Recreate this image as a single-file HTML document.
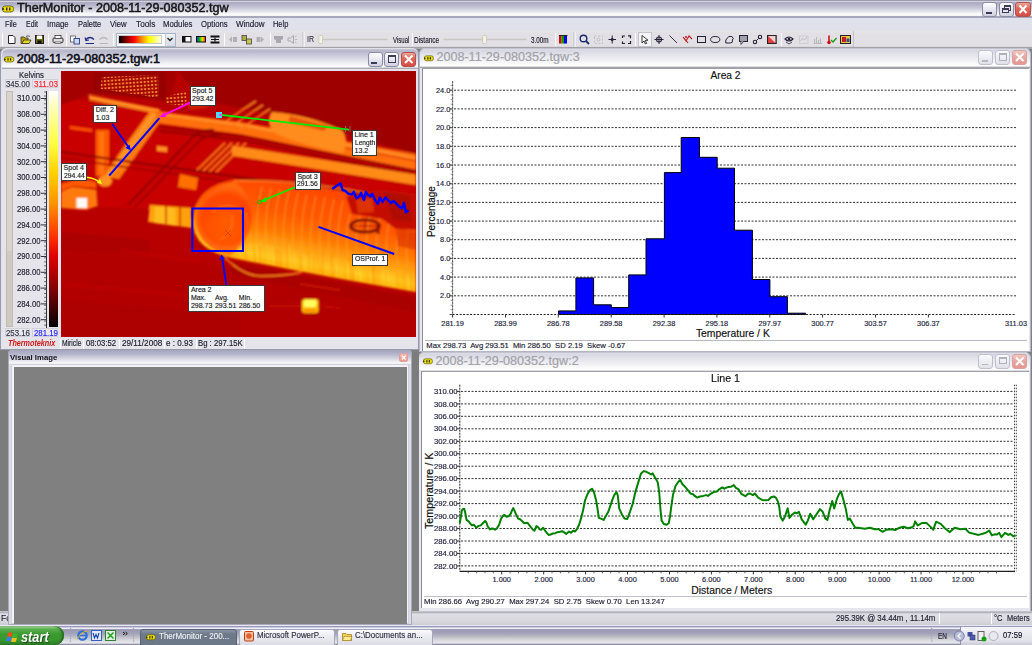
<!DOCTYPE html>
<html><head><meta charset="utf-8">
<style>
*{margin:0;padding:0;box-sizing:border-box}
html,body{width:1032px;height:645px;overflow:hidden;background:#808080;font-family:"Liberation Sans",sans-serif;font-size:11px;color:#000;position:relative}
.a{position:absolute}
.t{position:absolute;white-space:pre;line-height:1;transform-origin:0 0}
svg{position:absolute;overflow:visible}
.xpb{position:absolute;border:1px solid #8b8ba8;border-radius:3px;background:linear-gradient(#ffffff,#ececf4 40%,#d0d0e0)}
.xpc{position:absolute;border:1px solid #b35050;border-radius:3px;background:linear-gradient(#eaa898,#df6a5a 40%,#d44c44)}
.xpb.in{border-color:#c0c0cc;background:linear-gradient(#fbfbfd,#f0f0f5 40%,#e0e0e8)}
.xpc.in{border-color:#d8a0a0;background:linear-gradient(#f2c8c0,#eaa8a0 40%,#e49890)}
</style></head><body>
<div class="a" style="left:0px;top:0px;width:1032px;height:18px;background:linear-gradient(#9c9cac 0px,#9c9cac 1px,#d4d4e0 1px,#d4d4e0 2px,#a9a9c3 2px,#b0b0c8 4px,#c8c8d8 8px,#e8e8f0 12px,#fbfbfb 14px,#f4f4f6 16px,#a8a8bc 16px,#a8a8bc 18px)"></div>
<svg style="left:2px;top:5px" width="12.0" height="8.0" viewBox="0 0 12 8"><rect x="0.5" y="1" width="11" height="6" rx="2.5" fill="#f0e000" stroke="#555500" stroke-width="0.8"/><rect x="4" y="2.5" width="1.5" height="3" fill="#333"/><rect x="7" y="2.5" width="1.5" height="3" fill="#333"/><circle cx="1" cy="4" r="1" fill="#223"/></svg>
<div class="t" style="left:17.30px;top:2.46px;font-size:12.8px;color:#161616;transform:scaleX(0.9830);-webkit-text-stroke:0.5px #161616">TherMonitor - 2008-11-29-080352.tgw</div>
<div class="xpb" style="left:982px;top:2px;width:15px;height:15px"></div><div class="a" style="left:986px;top:12px;width:6px;height:2px;background:#3c3c58"></div>
<div class="xpb" style="left:999px;top:2px;width:15px;height:15px"></div><div class="a" style="left:1004px;top:5px;width:7px;height:6px;border:1px solid #3c3c58;border-top-width:2px"></div>
<div class="a" style="left:1002px;top:8px;width:7px;height:5px;border:1px solid #3c3c58;border-top-width:2px;background:#e4e4ee"></div>
<div class="xpc" style="left:1015px;top:2px;width:16px;height:15px"></div><svg style="left:1015px;top:2px" width="16" height="15"><path d="M4.5 3.5 L11.5 11 M11.5 3.5 L4.5 11" stroke="#fff" stroke-width="2"/></svg><div class="a" style="left:0px;top:18px;width:1032px;height:12.5px;background:#dfe2ea"></div>
<div class="t" style="left:4.70px;top:19.62px;font-size:8.6px;color:#1c1c30;transform:scaleX(0.8515);-webkit-text-stroke:0.15px #1c1c30">File</div>
<div class="t" style="left:25.70px;top:19.62px;font-size:8.6px;color:#1c1c30;transform:scaleX(0.8097);-webkit-text-stroke:0.15px #1c1c30">Edit</div>
<div class="t" style="left:46.70px;top:19.62px;font-size:8.6px;color:#1c1c30;transform:scaleX(0.9037);-webkit-text-stroke:0.15px #1c1c30">Image</div>
<div class="t" style="left:77.70px;top:19.62px;font-size:8.6px;color:#1c1c30;transform:scaleX(0.8702);-webkit-text-stroke:0.15px #1c1c30">Palette</div>
<div class="t" style="left:110.00px;top:19.62px;font-size:8.6px;color:#1c1c30;transform:scaleX(0.9034);-webkit-text-stroke:0.15px #1c1c30">View</div>
<div class="t" style="left:135.70px;top:19.62px;font-size:8.6px;color:#1c1c30;transform:scaleX(0.9613);-webkit-text-stroke:0.15px #1c1c30">Tools</div>
<div class="t" style="left:163.30px;top:19.62px;font-size:8.6px;color:#1c1c30;transform:scaleX(0.9044);-webkit-text-stroke:0.15px #1c1c30">Modules</div>
<div class="t" style="left:200.70px;top:19.62px;font-size:8.6px;color:#1c1c30;transform:scaleX(0.8975);-webkit-text-stroke:0.15px #1c1c30">Options</div>
<div class="t" style="left:235.70px;top:19.62px;font-size:8.6px;color:#1c1c30;transform:scaleX(0.9350);-webkit-text-stroke:0.15px #1c1c30">Window</div>
<div class="t" style="left:272.70px;top:19.62px;font-size:8.6px;color:#1c1c30;transform:scaleX(0.8650);-webkit-text-stroke:0.15px #1c1c30">Help</div>
<div class="a" style="left:0px;top:30.5px;width:1032px;height:17.5px;background:linear-gradient(#e6e6e8,#e2e0e4 2px,#e2e0e4 15px,#c8c8cc 16.5px,#a4a4a4 17.5px)"></div>
<div class="a" style="left:0px;top:48px;width:1032px;height:1px;background:#a8a8ac"></div>
<div class="a" style="left:2px;top:33px;width:1px;height:13px;background:#b8b8c0;border-right:1px solid #fff"></div>
<div class="a" style="left:48.3px;top:33px;width:1px;height:13px;background:#b8b8c0;border-right:1px solid #fff"></div>
<div class="a" style="left:66.3px;top:33px;width:1px;height:13px;background:#b8b8c0;border-right:1px solid #fff"></div>
<div class="a" style="left:113px;top:33px;width:1px;height:13px;background:#b8b8c0;border-right:1px solid #fff"></div>
<div class="a" style="left:223.7px;top:33px;width:1px;height:13px;background:#b8b8c0;border-right:1px solid #fff"></div>
<div class="a" style="left:269.5px;top:33px;width:1px;height:13px;background:#b8b8c0;border-right:1px solid #fff"></div>
<div class="a" style="left:411.6px;top:33px;width:1px;height:13px;background:#b8b8c0;border-right:1px solid #fff"></div>
<div class="a" style="left:554.8px;top:33px;width:1px;height:13px;background:#b8b8c0;border-right:1px solid #fff"></div>
<div class="a" style="left:635px;top:33px;width:1px;height:13px;background:#b8b8c0;border-right:1px solid #fff"></div>
<div class="a" style="left:780.7px;top:33px;width:1px;height:13px;background:#b8b8c0;border-right:1px solid #fff"></div>
<div class="a" style="left:301.5px;top:32px;width:3px;height:15px;background:linear-gradient(90deg,#c8c8d0,#f8f8fa)"></div>
<div class="a" style="left:573px;top:32px;width:3px;height:15px;background:linear-gradient(90deg,#c8c8d0,#f8f8fa)"></div>
<div class="a" style="left:853px;top:31px;width:1px;height:17px;background:#c0c0c8"></div>
<svg style="left:0;top:0" width="1032" height="50"><path d="M8.5 35.5 h4.5 l2 2 v6 h-6.5z" fill="#fff" stroke="#222" stroke-width="1"/><path d="M21 37 h3 l1 1 h3 v5.5 h-7z" fill="#b8a000" stroke="#333" stroke-width="0.8"/><path d="M22 43.5 l1.8-3.5 h7.2 l-1.8 3.5z" fill="#e8d820" stroke="#333" stroke-width="0.8"/><path d="M26 36.5 q2-1.5 4 0" fill="none" stroke="#333" stroke-width="0.8"/><rect x="35.5" y="35.5" width="8" height="8" fill="#6a6a10" stroke="#222" stroke-width="1"/><rect x="37" y="35.5" width="5" height="3.5" fill="#fff"/><rect x="37.5" y="40.5" width="4" height="3" fill="#111"/><rect x="53" y="38" width="10" height="4.5" rx="1" fill="#dcdcdc" stroke="#333" stroke-width="1"/><rect x="55" y="35.5" width="6" height="3" fill="#fff" stroke="#333" stroke-width="0.8"/><rect x="55" y="42" width="6" height="1.5" fill="#fff" stroke="#333" stroke-width="0.6"/><rect x="70.5" y="36" width="5" height="6" fill="#fff" stroke="#556" stroke-width="0.8"/><rect x="74" y="38.5" width="5.5" height="5.5" fill="#ccd8f0" stroke="#2a3a8a" stroke-width="0.9"/><path d="M86 39.5 q4-4 8 0" fill="none" stroke="#1a2a8a" stroke-width="1.3"/><path d="M85 37.5 l1 3 l3-0.5" fill="none" stroke="#1a2a8a" stroke-width="1.2"/><path d="M85.5 43.5 h8.5" stroke="#1a2a8a" stroke-width="1"/><path d="M99.5 39.5 q4-4 8 0" fill="none" stroke="#b8b8c0" stroke-width="1.3"/><path d="M99.5 43.5 h8.5" stroke="#b8b8c0" stroke-width="1"/><rect x="182.5" y="36.5" width="8.5" height="5.5" fill="#fff" stroke="#111" stroke-width="1"/><rect x="182.5" y="36.5" width="3" height="5.5" fill="#111"/><defs><linearGradient id="rb" x1="0" x2="1"><stop offset="0" stop-color="#2020ff"/><stop offset=".35" stop-color="#00c000"/><stop offset=".65" stop-color="#ffe000"/><stop offset="1" stop-color="#ff2000"/></linearGradient></defs><rect x="196.5" y="36.5" width="9" height="5.5" fill="url(#rb)" stroke="#111" stroke-width="1"/><rect x="210.5" y="35.5" width="9" height="2" fill="#111"/><rect x="210.5" y="41.5" width="9" height="2" fill="#111"/><path d="M211 39.5 h8" stroke="#111" stroke-width="1"/><path d="M215 37.5 v4" stroke="#111" stroke-width="1.2"/><path d="M229 39.5 l3-3 v6z M233 37 h4 v5 h-4z" fill="#b0b0b8"/><rect x="242" y="35.5" width="4.5" height="5" fill="#b0b040" stroke="#444" stroke-width="0.8"/><rect x="246.5" y="39" width="5" height="5" fill="#c8c850" stroke="#444" stroke-width="0.8"/><path d="M264 39.5 l-3-3 v6z M256.5 37 h4 v5 h-4z" fill="#b0b0b8"/><path d="M274 36 h9 v3 l-2 1 v3 h-5 v-3 l-2-1z" fill="#a8a8b0"/><path d="M288 38 h2.5 l3-2.5 v8 l-3-2.5 h-2.5z" fill="none" stroke="#a8a8b0" stroke-width="1"/><path d="M295 37 l1.5 -1 M295 39.5 h2 M295 42 l1.5 1" stroke="#a8a8b0" stroke-width="0.8"/><path d="M322 39.5 h65.5" stroke="#c8c8c0" stroke-width="1.5"/><rect x="318.8" y="35.5" width="3.8" height="8" rx="1" fill="#f4f2e4" stroke="#c8c4b0" stroke-width="0.8"/><path d="M443.5 39.5 h83" stroke="#c8c8c0" stroke-width="1.5"/><rect x="482.6" y="35.5" width="4" height="8" rx="1" fill="#f4f2e4" stroke="#c8c4b0" stroke-width="0.8"/><rect x="559" y="35.5" width="2.5" height="8" fill="#e00000"/><rect x="561.5" y="35.5" width="2.5" height="8" fill="#00a000"/><rect x="564" y="35.5" width="3" height="8" fill="#0000e0"/><path d="M559 35.5 h8.5" stroke="#222" stroke-width="1"/><circle cx="583.5" cy="38.5" r="3.3" fill="none" stroke="#1a2a70" stroke-width="1.4"/><path d="M586 41 l3 3" stroke="#1a2a70" stroke-width="1.8"/><rect x="594.5" y="36" width="8" height="7.5" fill="none" stroke="#b8b8c0" stroke-width="0.8" stroke-dasharray="2 1.5"/><circle cx="598.5" cy="39.7" r="1.5" fill="none" stroke="#b8b8c0" stroke-width="0.8"/><path d="M608.5 39.5 h7.5 M612.2 35.5 v8" stroke="#222238" stroke-width="1"/><circle cx="612.2" cy="39.5" r="1.5" fill="#222238"/><path d="M622.5 38 v-2 h2.5 M628 35.8 h2.5 v2.5 M630.5 41 v2.5 h-2.5 M625 43.5 h-2.5 v-2" fill="none" stroke="#222238" stroke-width="1.2"/><rect x="638.5" y="32.5" width="13" height="14" fill="#f4f4f6" stroke="#c4c4cc" stroke-width="1"/><path d="M642 35.5 v7.5 l2-2 l1.5 3 l1.2-0.6 l-1.5-3 l2.8-0.2z" fill="#fff" stroke="#222" stroke-width="0.9"/><circle cx="659" cy="39.5" r="2.5" fill="none" stroke="#222238" stroke-width="1.1"/><path d="M654.5 39.5 h9 M659 35 v9" stroke="#222238" stroke-width="1"/><path d="M669.5 35.5 l7.5 7.5" stroke="#333348" stroke-width="1"/><path d="M683 37 l3 4 l3-5 l3 3 M684 38 l4 5" fill="none" stroke="#c02020" stroke-width="1.1"/><circle cx="686" cy="37" r="1" fill="#c02020"/><rect x="697.5" y="36.5" width="8" height="6" fill="none" stroke="#222238" stroke-width="1"/><ellipse cx="715.2" cy="39.5" rx="4.6" ry="3" fill="none" stroke="#222238" stroke-width="1"/><path d="M725.8 43 v-3 l3-3.5 q4-1 4.5 2 l-1 1.5 q1 3-2 3z" fill="none" stroke="#222238" stroke-width="1"/><rect x="739.5" y="35.5" width="8" height="6" fill="#a0a0a8" stroke="#222238" stroke-width="1"/><path d="M741 41.5 l0 3 l2.5-3" fill="#fff" stroke="#222238" stroke-width="0.8"/><circle cx="755" cy="42" r="1.7" fill="none" stroke="#222238" stroke-width="1.1"/><circle cx="760" cy="37" r="1.7" fill="none" stroke="#222238" stroke-width="1.1"/><path d="M756.3 40.7 l2.4-2.4" stroke="#222238" stroke-width="1"/><rect x="767.5" y="35.5" width="8.5" height="8" fill="#e04040" stroke="#222" stroke-width="1"/><path d="M767.5 35.5 l8.5 8 v-8z" fill="#f0d0d0"/><rect x="767.5" y="35.5" width="8.5" height="8" fill="none" stroke="#222" stroke-width="1"/><path d="M785 39 q4-4 8 0 q-4 4-8 0z" fill="#fff" stroke="#222238" stroke-width="1.1"/><circle cx="789" cy="39" r="1.5" fill="#222238"/><path d="M786 42 l3 2 l3-2" fill="none" stroke="#222238" stroke-width="0.8"/><rect x="799.5" y="36" width="8.5" height="7.5" fill="none" stroke="#c8c8d0" stroke-width="0.8"/><path d="M800.5 41 l2-3 l2 2 l2.5-3" fill="none" stroke="#b8b8c0" stroke-width="0.9"/><path d="M813.5 43.5 h8.5 M814.5 43 v-4 M816.5 43 v-6 M818.5 43 v-3 M820.5 43 v-5" stroke="#b8b8c0" stroke-width="1.1"/><path d="M829 35.5 v6.5" stroke="#d01010" stroke-width="1.6"/><circle cx="829" cy="42.5" r="1.8" fill="#d01010"/><path d="M831 40 l2 2 l3.5-4" fill="none" stroke="#10a010" stroke-width="1.3"/><rect x="840.5" y="35.5" width="10" height="8" fill="#f0c040" stroke="#222" stroke-width="1"/><rect x="842" y="37" width="4" height="5" fill="#c02020"/><rect x="846.5" y="38.5" width="3" height="3.5" fill="#3050a0"/></svg>
<div class="a" style="left:115.5px;top:32.5px;width:60.5px;height:14px;background:#fff;border:1px solid #a0b4cc"></div>
<div class="a" style="left:118px;top:35.2px;width:44px;height:8.6px;background:linear-gradient(90deg,#000 0%,#700000 15%,#ff0000 35%,#ff9000 55%,#ffff00 72%,#ffffe8 100%);border:1px solid #c8c8c8"></div>
<div class="a" style="left:165px;top:33.5px;width:10px;height:12px;background:linear-gradient(#f0f0f6,#d8dae6);border-left:1px solid #c8d0e0"></div>
<svg style="left:165px;top:33px" width="10" height="12"><path d="M2.5 5 l2.5 2.5 l2.5-2.5" fill="none" stroke="#222" stroke-width="1.4"/></svg>
<div class="t" style="left:307.00px;top:35.42px;font-size:8.6px;color:#3a3a4a;transform:scaleX(0.8140);-webkit-text-stroke:0.15px #3a3a4a">IR</div>
<div class="t" style="left:392.70px;top:35.62px;font-size:8.6px;color:#1a1a2a;transform:scaleX(0.7048);-webkit-text-stroke:0.15px #1a1a2a">Visual</div>
<div class="t" style="left:413.60px;top:35.62px;font-size:8.6px;color:#1a1a2a;transform:scaleX(0.7531);-webkit-text-stroke:0.15px #1a1a2a">Distance</div>
<div class="t" style="left:531.40px;top:35.62px;font-size:8.6px;color:#1a1a2a;transform:scaleX(0.7363);-webkit-text-stroke:0.15px #1a1a2a">3.00m</div>
<div class="a" style="left:0px;top:47.5px;width:419px;height:302px;background:#e2e3ea;border:1px solid #9a9aae;border-top:none;border-radius:6px 6px 0 0"></div>
<div class="a" style="left:1.5px;top:48.5px;width:416px;height:20px;border-radius:6px 6px 0 0;background:linear-gradient(#c8c8d8 0,#b6b6ca 2px,#c4c4d6 5px,#dcdce6 10px,#f4f4f8 15px,#ffffff 18px,#b0b0bc 19px,#a8a8b4 20px)"></div>
<svg style="left:3.8px;top:56px" width="10.2" height="6.8" viewBox="0 0 12 8"><rect x="0.5" y="1" width="11" height="6" rx="2.5" fill="#f0e000" stroke="#555500" stroke-width="0.8"/><rect x="4" y="2.5" width="1.5" height="3" fill="#333"/><rect x="7" y="2.5" width="1.5" height="3" fill="#333"/><circle cx="1" cy="4" r="1" fill="#223"/></svg>
<div class="t" style="left:16.70px;top:53.23px;font-size:12.6px;color:#0e0e18;-webkit-text-stroke:0.55px #0e0e18">2008-11-29-080352.tgw:1</div>
<div class="xpb" style="left:367.5px;top:51.6px;width:15px;height:15px"></div><div class="a" style="left:371px;top:61.5px;width:6px;height:2px;background:#3c3c58"></div>
<div class="xpb" style="left:384px;top:51.6px;width:15px;height:15px"></div><div class="a" style="left:387.5px;top:55px;width:8px;height:7.5px;border:1px solid #3c3c58;border-top-width:2px"></div>
<div class="xpc" style="left:400.7px;top:51.6px;width:15.5px;height:15px"></div><svg style="left:400.7px;top:51.6px" width="16" height="15"><path d="M4 3.5 L11.5 11 M11.5 3.5 L4 11" stroke="#fff" stroke-width="2"/></svg><div class="a" style="left:2px;top:68.5px;width:415px;height:280px;background:#e4e4ea"></div>
<div class="t" style="left:18.50px;top:71.32px;font-size:8.6px;color:#202030;transform:scaleX(0.9017);-webkit-text-stroke:0.15px #202030">Kelvins</div>
<div class="a" style="left:4.5px;top:79px;width:25px;height:9px;background:#e8e8ee;border:1px solid #d0d0d8"></div>
<div class="a" style="left:32px;top:79px;width:26px;height:9px;background:#e8e8ee;border:1px solid #d0d0d8"></div>
<div class="t" style="left:5.50px;top:79.72px;font-size:8.6px;color:#303040;transform:scaleX(0.9124);-webkit-text-stroke:0.15px #303040">345.00</div>
<div class="t" style="left:33.50px;top:79.72px;font-size:8.6px;color:#ff2030;transform:scaleX(0.9351);-webkit-text-stroke:0.15px #ff2030">311.03</div>
<div class="a" style="left:6px;top:90.5px;width:7px;height:236px;background:linear-gradient(#d8d4cc,#d8d4cc 68%,#cfcabf 68%);border:1px solid #c0bcb4"></div>
<div class="a" style="left:48.5px;top:91px;width:9px;height:236px;background:linear-gradient(#ffffff 0%,#ffffc0 6%,#ffff40 22%,#ffd000 35%,#ff9000 48%,#ff3000 62%,#e00000 70%,#900000 82%,#400000 92%,#000 100%)"></div>
<div class="a" style="left:46px;top:90.5px;width:1px;height:237px;background:#303030"></div>
<div class="t" style="left:16.50px;top:94.32px;font-size:8.6px;color:#202030;transform:scaleX(0.8934);-webkit-text-stroke:0.15px #202030">310.00</div>
<div class="t" style="left:16.50px;top:110.12px;font-size:8.6px;color:#202030;transform:scaleX(0.8934);-webkit-text-stroke:0.15px #202030">308.00</div>
<div class="t" style="left:16.50px;top:125.92px;font-size:8.6px;color:#202030;transform:scaleX(0.8934);-webkit-text-stroke:0.15px #202030">306.00</div>
<div class="t" style="left:16.50px;top:141.72px;font-size:8.6px;color:#202030;transform:scaleX(0.8934);-webkit-text-stroke:0.15px #202030">304.00</div>
<div class="t" style="left:16.50px;top:157.52px;font-size:8.6px;color:#202030;transform:scaleX(0.8934);-webkit-text-stroke:0.15px #202030">302.00</div>
<div class="t" style="left:16.50px;top:173.32px;font-size:8.6px;color:#202030;transform:scaleX(0.8934);-webkit-text-stroke:0.15px #202030">300.00</div>
<div class="t" style="left:16.50px;top:189.12px;font-size:8.6px;color:#202030;transform:scaleX(0.8934);-webkit-text-stroke:0.15px #202030">298.00</div>
<div class="t" style="left:16.50px;top:204.92px;font-size:8.6px;color:#202030;transform:scaleX(0.8934);-webkit-text-stroke:0.15px #202030">296.00</div>
<div class="t" style="left:16.50px;top:220.72px;font-size:8.6px;color:#202030;transform:scaleX(0.8934);-webkit-text-stroke:0.15px #202030">294.00</div>
<div class="t" style="left:16.50px;top:236.52px;font-size:8.6px;color:#202030;transform:scaleX(0.8934);-webkit-text-stroke:0.15px #202030">292.00</div>
<div class="t" style="left:16.50px;top:252.32px;font-size:8.6px;color:#202030;transform:scaleX(0.8934);-webkit-text-stroke:0.15px #202030">290.00</div>
<div class="t" style="left:16.50px;top:268.12px;font-size:8.6px;color:#202030;transform:scaleX(0.8934);-webkit-text-stroke:0.15px #202030">288.00</div>
<div class="t" style="left:16.50px;top:283.92px;font-size:8.6px;color:#202030;transform:scaleX(0.8934);-webkit-text-stroke:0.15px #202030">286.00</div>
<div class="t" style="left:16.50px;top:299.72px;font-size:8.6px;color:#202030;transform:scaleX(0.8934);-webkit-text-stroke:0.15px #202030">284.00</div>
<div class="t" style="left:16.50px;top:315.52px;font-size:8.6px;color:#202030;transform:scaleX(0.8934);-webkit-text-stroke:0.15px #202030">282.00</div>
<svg style="left:0;top:0" width="60" height="340"><path d="M41 98.5 h5" stroke="#303040" stroke-width="1"/><path d="M41 114.3 h5" stroke="#303040" stroke-width="1"/><path d="M41 130.1 h5" stroke="#303040" stroke-width="1"/><path d="M41 145.9 h5" stroke="#303040" stroke-width="1"/><path d="M41 161.7 h5" stroke="#303040" stroke-width="1"/><path d="M41 177.5 h5" stroke="#303040" stroke-width="1"/><path d="M41 193.3 h5" stroke="#303040" stroke-width="1"/><path d="M41 209.1 h5" stroke="#303040" stroke-width="1"/><path d="M41 224.9 h5" stroke="#303040" stroke-width="1"/><path d="M41 240.7 h5" stroke="#303040" stroke-width="1"/><path d="M41 256.5 h5" stroke="#303040" stroke-width="1"/><path d="M41 272.3 h5" stroke="#303040" stroke-width="1"/><path d="M41 288.1 h5" stroke="#303040" stroke-width="1"/><path d="M41 303.9 h5" stroke="#303040" stroke-width="1"/><path d="M41 319.7 h5" stroke="#303040" stroke-width="1"/><path d="M44 92.0 h2" stroke="#505060" stroke-width="0.8"/><path d="M44 96.0 h2" stroke="#505060" stroke-width="0.8"/><path d="M44 99.9 h2" stroke="#505060" stroke-width="0.8"/><path d="M44 103.8 h2" stroke="#505060" stroke-width="0.8"/><path d="M44 107.8 h2" stroke="#505060" stroke-width="0.8"/><path d="M44 111.8 h2" stroke="#505060" stroke-width="0.8"/><path d="M44 115.7 h2" stroke="#505060" stroke-width="0.8"/><path d="M44 119.7 h2" stroke="#505060" stroke-width="0.8"/><path d="M44 123.6 h2" stroke="#505060" stroke-width="0.8"/><path d="M44 127.6 h2" stroke="#505060" stroke-width="0.8"/><path d="M44 131.5 h2" stroke="#505060" stroke-width="0.8"/><path d="M44 135.4 h2" stroke="#505060" stroke-width="0.8"/><path d="M44 139.4 h2" stroke="#505060" stroke-width="0.8"/><path d="M44 143.3 h2" stroke="#505060" stroke-width="0.8"/><path d="M44 147.3 h2" stroke="#505060" stroke-width="0.8"/><path d="M44 151.2 h2" stroke="#505060" stroke-width="0.8"/><path d="M44 155.2 h2" stroke="#505060" stroke-width="0.8"/><path d="M44 159.2 h2" stroke="#505060" stroke-width="0.8"/><path d="M44 163.1 h2" stroke="#505060" stroke-width="0.8"/><path d="M44 167.1 h2" stroke="#505060" stroke-width="0.8"/><path d="M44 171.0 h2" stroke="#505060" stroke-width="0.8"/><path d="M44 174.9 h2" stroke="#505060" stroke-width="0.8"/><path d="M44 178.9 h2" stroke="#505060" stroke-width="0.8"/><path d="M44 182.9 h2" stroke="#505060" stroke-width="0.8"/><path d="M44 186.8 h2" stroke="#505060" stroke-width="0.8"/><path d="M44 190.8 h2" stroke="#505060" stroke-width="0.8"/><path d="M44 194.7 h2" stroke="#505060" stroke-width="0.8"/><path d="M44 198.7 h2" stroke="#505060" stroke-width="0.8"/><path d="M44 202.6 h2" stroke="#505060" stroke-width="0.8"/><path d="M44 206.6 h2" stroke="#505060" stroke-width="0.8"/><path d="M44 210.5 h2" stroke="#505060" stroke-width="0.8"/><path d="M44 214.4 h2" stroke="#505060" stroke-width="0.8"/><path d="M44 218.4 h2" stroke="#505060" stroke-width="0.8"/><path d="M44 222.3 h2" stroke="#505060" stroke-width="0.8"/><path d="M44 226.3 h2" stroke="#505060" stroke-width="0.8"/><path d="M44 230.2 h2" stroke="#505060" stroke-width="0.8"/><path d="M44 234.2 h2" stroke="#505060" stroke-width="0.8"/><path d="M44 238.2 h2" stroke="#505060" stroke-width="0.8"/><path d="M44 242.1 h2" stroke="#505060" stroke-width="0.8"/><path d="M44 246.1 h2" stroke="#505060" stroke-width="0.8"/><path d="M44 250.0 h2" stroke="#505060" stroke-width="0.8"/><path d="M44 254.0 h2" stroke="#505060" stroke-width="0.8"/><path d="M44 257.9 h2" stroke="#505060" stroke-width="0.8"/><path d="M44 261.9 h2" stroke="#505060" stroke-width="0.8"/><path d="M44 265.8 h2" stroke="#505060" stroke-width="0.8"/><path d="M44 269.8 h2" stroke="#505060" stroke-width="0.8"/><path d="M44 273.7 h2" stroke="#505060" stroke-width="0.8"/><path d="M44 277.6 h2" stroke="#505060" stroke-width="0.8"/><path d="M44 281.6 h2" stroke="#505060" stroke-width="0.8"/><path d="M44 285.6 h2" stroke="#505060" stroke-width="0.8"/><path d="M44 289.5 h2" stroke="#505060" stroke-width="0.8"/><path d="M44 293.5 h2" stroke="#505060" stroke-width="0.8"/><path d="M44 297.4 h2" stroke="#505060" stroke-width="0.8"/><path d="M44 301.4 h2" stroke="#505060" stroke-width="0.8"/><path d="M44 305.3 h2" stroke="#505060" stroke-width="0.8"/><path d="M44 309.2 h2" stroke="#505060" stroke-width="0.8"/><path d="M44 313.2 h2" stroke="#505060" stroke-width="0.8"/><path d="M44 317.1 h2" stroke="#505060" stroke-width="0.8"/><path d="M44 321.1 h2" stroke="#505060" stroke-width="0.8"/><path d="M44 325.1 h2" stroke="#505060" stroke-width="0.8"/></svg><div class="a" style="left:4.5px;top:328px;width:25px;height:9px;background:#e8e8ee;border:1px solid #d0d0d8"></div>
<div class="a" style="left:32px;top:328px;width:26px;height:9px;background:#e8e8ee;border:1px solid #d0d0d8"></div>
<div class="t" style="left:5.50px;top:328.92px;font-size:8.6px;color:#303040;transform:scaleX(0.9124);-webkit-text-stroke:0.15px #303040">253.16</div>
<div class="t" style="left:33.50px;top:328.92px;font-size:8.6px;color:#2020ff;transform:scaleX(0.9124);-webkit-text-stroke:0.15px #2020ff">281.19</div>
<svg style="left:61px;top:71px" width="355" height="266" viewBox="61 71 355 266"><defs><clipPath id="tc"><rect x="61" y="71" width="355" height="266"/></clipPath><filter id="bl" x="-10%" y="-10%" width="120%" height="120%"><feGaussianBlur stdDeviation="0.8"/></filter><linearGradient id="cylG" gradientUnits="userSpaceOnUse" x1="300" y1="184" x2="283" y2="274"><stop offset="0" stop-color="#ff4800"/><stop offset="0.35" stop-color="#ff5a00"/><stop offset="0.55" stop-color="#ff7800"/><stop offset="0.7" stop-color="#ffa010"/><stop offset="0.84" stop-color="#ffc820"/><stop offset="0.95" stop-color="#ffa800"/><stop offset="1" stop-color="#ff7000"/></linearGradient><radialGradient id="endG" gradientUnits="userSpaceOnUse" cx="226" cy="220" r="34"><stop offset="0" stop-color="#ff5800"/><stop offset="0.7" stop-color="#ff4000"/><stop offset="1" stop-color="#ff7010"/></radialGradient><pattern id="dots" width="3.6" height="3.6" patternUnits="userSpaceOnUse" patternTransform="rotate(-4)"><rect width="3.6" height="3.6" fill="#a80800"/><rect x="0.8" y="0.8" width="2" height="2" rx="0.6" fill="#ffa040"/></pattern></defs><g clip-path="url(#tc)"><rect x="61" y="71" width="355" height="266" fill="#b80000"/><g filter="url(#bl)"><path d="M61 98 L160 110 L416 172 V240 L300 205 L200 212 L61 205 Z" fill="#c80600"/><path d="M178 71 H416 V154 L330 130 L260 112 L200 100 Z" fill="#9e0000"/><path d="M61 71 H178 L170 98 L90 94 L61 105 Z" fill="#a40000"/><path d="M61 250 L200 262 L300 280 L416 296 V337 H61 Z" fill="#b20000"/><path d="M61 232 L150 240 L150 255 L61 250 Z" fill="#a80000" opacity="0.7"/><path d="M61 300 L240 315 L240 337 L61 337 Z" fill="#aa0000" opacity="0.6"/><path d="M95 73 L165 71 L166 101 L93 92 Z" fill="#960000"/><path d="M185 102 L200 100 L210 108 L190 110 Z" fill="#e03000" opacity="0.6"/><path d="M89 95 L160 109 L159 114 L89 100 Z" fill="#ff8a20"/><path d="M70 126 L92 129 L92 132 L70 129 Z" fill="#ff5000"/><path d="M96 130 H109 V176 H96 Z" fill="#ff5a00"/><path d="M99 132 H104 V174 H99 Z" fill="#ff7a10" opacity="0.8"/><path d="M157 146 L167 147 L167 152 L157 151 Z" fill="#ff9020"/><path d="M150 111 L166 113 L119 179 L103 176 Z" fill="#ff7a10"/><path d="M152 113 L158 114 L111 177 L105 176 Z" fill="#ffa030" opacity="0.7"/><ellipse cx="105" cy="181" rx="7" ry="5.5" fill="#ff9020"/><path d="M155 111 L241 122 L416 154 L416 170 L241 134 L158 123 Z" fill="#ff7010"/><path d="M165 115 L241 125 L416 158" stroke="#ff9a30" stroke-width="1.6" fill="none"/><path d="M300 140 L416 161" stroke="#d83000" stroke-width="1.2" fill="none"/><path d="M226 121 L256 101 M233 125 L263 105 M240 129 L270 109" stroke="#ff7a20" stroke-width="1.6"/><path d="M272 112 Q305 114 342 130 Q350 141 343 153 Q305 146 276 134 Q264 123 272 112 Z" fill="#ff8c1c"/><path d="M290 116 L328 126 L324 131 L288 122 Z" fill="#d83000" opacity="0.6"/><path d="M160 127 L241 136 L416 171 M160 131 L241 140 L416 175" stroke="#900000" stroke-width="1.8" fill="none"/><path d="M232 146 L241 147 L416 174.5 L416 185 L241 157 L232 156 Z" fill="#ff8a18"/><path d="M195 172 L225 143" stroke="#ff8020" stroke-width="1.6"/><path d="M202 172 L232 143" stroke="#ff8020" stroke-width="1.6"/><path d="M209 172 L239 143" stroke="#ff8020" stroke-width="1.6"/><path d="M216 172 L246 143" stroke="#ff8020" stroke-width="1.6"/><path d="M128 205 L194 136 Q202 129 214 130" stroke="#900000" stroke-width="2" fill="none"/><path d="M134 208 L200 140 Q208 134 220 135" stroke="#900000" stroke-width="1.6" fill="none"/><path d="M61 152 L260 180 L416 200" stroke="#900000" stroke-width="2.2" fill="none"/><path d="M61 158 L260 186" stroke="#a00000" stroke-width="1.6" fill="none"/><path d="M61 192 L72 187 L96 190 L97 206 L86 210 L61 208 Z" fill="#ff7a10"/><path d="M61 184 L80 179 L96 182 L96 188 L72 186 L61 191 Z" fill="#ff5a00"/><rect x="76.5" y="198" width="10.5" height="10" fill="#fffcf6"/><path d="M150 205 L191 208 L192 228 L148 222 Z" fill="#ffa010"/><path d="M155 206 L175 208 L176 226 L154 223 Z" fill="#ffc020" opacity="0.8"/><path d="M166 206 v20 M180 207 v20" stroke="#c01000" stroke-width="1.2"/><path d="M180 174 L198 178 L196 190 L178 187 Z" fill="#ff7000"/><path d="M234 180 Q300 178 416 208 L416 292 Q330 278 232 258 Q194 250 192 221 Q196 185 234 180 Z" fill="url(#cylG)"/><path d="M234 182 Q200 188 196 221 Q198 248 230 256 Q252 240 252 214 Q250 192 234 182 Z" fill="url(#endG)" opacity="0.85"/><path d="M212 212 Q228 198 246 214 Q252 234 236 248 M220 240 Q235 232 232 215" stroke="#ff9a30" stroke-width="1" fill="none" opacity="0.6"/><path d="M234 181 Q300 179 380 196" stroke="#ff9030" stroke-width="1.5" fill="none" opacity="0.8"/><path d="M262 186.7 Q253 221.5 259 256.2" stroke="#ffb040" stroke-width="1.1" fill="none" opacity="0.55"/><path d="M271 188.3 Q262 223.1 268 257.9" stroke="#ffb040" stroke-width="1.1" fill="none" opacity="0.55"/><path d="M280 189.8 Q271 224.7 277 259.6" stroke="#ffb040" stroke-width="1.1" fill="none" opacity="0.55"/><path d="M289 191.3 Q280 226.3 286 261.3" stroke="#ffb040" stroke-width="1.1" fill="none" opacity="0.55"/><path d="M298 192.9 Q289 227.9 295 263.0" stroke="#ffb040" stroke-width="1.1" fill="none" opacity="0.55"/><path d="M307 194.4 Q298 229.6 304 264.7" stroke="#ffb040" stroke-width="1.1" fill="none" opacity="0.55"/><path d="M316 195.9 Q307 231.2 313 266.4" stroke="#ffb040" stroke-width="1.1" fill="none" opacity="0.55"/><path d="M325 197.4 Q316 232.8 322 268.1" stroke="#ffb040" stroke-width="1.1" fill="none" opacity="0.55"/><path d="M334 199.0 Q325 234.4 331 269.9" stroke="#ffb040" stroke-width="1.1" fill="none" opacity="0.55"/><path d="M343 200.5 Q334 236.0 340 271.6" stroke="#ffb040" stroke-width="1.1" fill="none" opacity="0.55"/><path d="M350 214.0 Q344 235.0 348 256.0" stroke="#ffb040" stroke-width="1.1" fill="none" opacity="0.55"/><path d="M360 215.0 Q354 236.4 358 257.9" stroke="#ffb040" stroke-width="1.1" fill="none" opacity="0.55"/><path d="M370 216.0 Q364 237.9 368 259.8" stroke="#ffb040" stroke-width="1.1" fill="none" opacity="0.55"/><path d="M380 217.0 Q374 239.3 378 261.7" stroke="#ffb040" stroke-width="1.1" fill="none" opacity="0.55"/><path d="M390 218.0 Q384 240.8 388 263.6" stroke="#ffb040" stroke-width="1.1" fill="none" opacity="0.55"/><path d="M400 219.0 Q394 242.2 398 265.5" stroke="#ffb040" stroke-width="1.1" fill="none" opacity="0.55"/><path d="M410 220.0 Q404 243.7 408 267.4" stroke="#ffb040" stroke-width="1.1" fill="none" opacity="0.55"/><path d="M239.7 246.8 L240.7 258.9" stroke="#ffe040" stroke-width="0.9" opacity="0.6"/><path d="M242.1 241.9 L243.1 259.4" stroke="#ffc020" stroke-width="0.9" opacity="0.6"/><path d="M245.6 237.3 L246.6 260.1" stroke="#ff9000" stroke-width="0.9" opacity="0.6"/><path d="M247.5 244.4 L248.5 260.4" stroke="#ffe040" stroke-width="0.9" opacity="0.6"/><path d="M250.6 243.3 L251.6 261.0" stroke="#ffe040" stroke-width="0.9" opacity="0.6"/><path d="M254.3 250.0 L255.3 261.7" stroke="#ff9000" stroke-width="0.9" opacity="0.6"/><path d="M256.7 244.0 L257.7 262.2" stroke="#ffe040" stroke-width="0.9" opacity="0.6"/><path d="M259.4 247.1 L260.4 262.7" stroke="#ff9000" stroke-width="0.9" opacity="0.6"/><path d="M261.3 241.0 L262.3 263.0" stroke="#ffc020" stroke-width="0.9" opacity="0.6"/><path d="M264.6 246.1 L265.6 263.7" stroke="#ffc020" stroke-width="0.9" opacity="0.6"/><path d="M267.6 244.7 L268.6 264.2" stroke="#ffe040" stroke-width="0.9" opacity="0.6"/><path d="M270.4 245.8 L271.4 264.8" stroke="#ffc020" stroke-width="0.9" opacity="0.6"/><path d="M272.4 245.2 L273.4 265.1" stroke="#ffe040" stroke-width="0.9" opacity="0.6"/><path d="M275.9 248.9 L276.9 265.8" stroke="#ff7a00" stroke-width="0.9" opacity="0.6"/><path d="M278.9 249.9 L279.9 266.4" stroke="#ff7a00" stroke-width="0.9" opacity="0.6"/><path d="M281.0 253.3 L282.0 266.8" stroke="#ff9000" stroke-width="0.9" opacity="0.6"/><path d="M284.3 254.0 L285.3 267.4" stroke="#ffc020" stroke-width="0.9" opacity="0.6"/><path d="M286.8 245.6 L287.8 267.9" stroke="#ff7a00" stroke-width="0.9" opacity="0.6"/><path d="M289.2 244.6 L290.2 268.3" stroke="#ffe040" stroke-width="0.9" opacity="0.6"/><path d="M292.3 256.6 L293.3 268.9" stroke="#ffc020" stroke-width="0.9" opacity="0.6"/><path d="M294.4 252.5 L295.4 269.3" stroke="#ffe040" stroke-width="0.9" opacity="0.6"/><path d="M298.5 259.0 L299.5 270.1" stroke="#ffc020" stroke-width="0.9" opacity="0.6"/><path d="M300.2 255.5 L301.2 270.4" stroke="#ff7a00" stroke-width="0.9" opacity="0.6"/><path d="M303.4 254.7 L304.4 271.0" stroke="#ffe040" stroke-width="0.9" opacity="0.6"/><path d="M306.7 255.0 L307.7 271.7" stroke="#ffe040" stroke-width="0.9" opacity="0.6"/><path d="M308.0 252.1 L309.0 271.9" stroke="#ff7a00" stroke-width="0.9" opacity="0.6"/><path d="M311.2 257.1 L312.2 272.5" stroke="#ffc020" stroke-width="0.9" opacity="0.6"/><path d="M313.5 256.5 L314.5 273.0" stroke="#ff9000" stroke-width="0.9" opacity="0.6"/><path d="M317.2 256.8 L318.2 273.7" stroke="#ff9000" stroke-width="0.9" opacity="0.6"/><path d="M320.2 262.4 L321.2 274.2" stroke="#ff9000" stroke-width="0.9" opacity="0.6"/><path d="M322.3 251.8 L323.3 274.6" stroke="#ff7a00" stroke-width="0.9" opacity="0.6"/><path d="M324.6 258.8 L325.6 275.1" stroke="#ffc020" stroke-width="0.9" opacity="0.6"/><path d="M328.6 254.4 L329.6 275.8" stroke="#ffc020" stroke-width="0.9" opacity="0.6"/><path d="M331.1 252.5 L332.1 276.3" stroke="#ff7a00" stroke-width="0.9" opacity="0.6"/><path d="M334.2 264.8 L335.2 276.9" stroke="#ff9000" stroke-width="0.9" opacity="0.6"/><path d="M335.7 258.0 L336.7 277.2" stroke="#ffe040" stroke-width="0.9" opacity="0.6"/><path d="M339.0 259.6 L340.0 277.8" stroke="#ffc020" stroke-width="0.9" opacity="0.6"/><path d="M341.4 266.2 L342.4 278.3" stroke="#ffc020" stroke-width="0.9" opacity="0.6"/><path d="M344.7 264.4 L345.7 278.9" stroke="#ff9000" stroke-width="0.9" opacity="0.6"/><path d="M347.6 262.2 L348.6 279.4" stroke="#ffe040" stroke-width="0.9" opacity="0.6"/><path d="M349.9 257.7 L350.9 279.9" stroke="#ff7a00" stroke-width="0.9" opacity="0.6"/><path d="M352.6 264.9 L353.6 280.4" stroke="#ff7a00" stroke-width="0.9" opacity="0.6"/><path d="M355.7 270.1 L356.7 281.0" stroke="#ffe040" stroke-width="0.9" opacity="0.6"/><path d="M359.0 265.4 L360.0 281.6" stroke="#ffe040" stroke-width="0.9" opacity="0.6"/><path d="M360.7 271.2 L361.7 281.9" stroke="#ffe040" stroke-width="0.9" opacity="0.6"/><path d="M363.9 265.0 L364.9 282.5" stroke="#ffc020" stroke-width="0.9" opacity="0.6"/><path d="M366.7 272.1 L367.7 283.1" stroke="#ff9000" stroke-width="0.9" opacity="0.6"/><path d="M369.4 271.5 L370.4 283.6" stroke="#ffc020" stroke-width="0.9" opacity="0.6"/><path d="M372.7 265.8 L373.7 284.2" stroke="#ff7a00" stroke-width="0.9" opacity="0.6"/><path d="M374.1 262.6 L375.1 284.5" stroke="#ff7a00" stroke-width="0.9" opacity="0.6"/><path d="M377.5 270.8 L378.5 285.1" stroke="#ff9000" stroke-width="0.9" opacity="0.6"/><path d="M379.6 270.7 L380.6 285.5" stroke="#ffc020" stroke-width="0.9" opacity="0.6"/><path d="M383.0 266.5 L384.0 286.2" stroke="#ffe040" stroke-width="0.9" opacity="0.6"/><path d="M385.3 263.3 L386.3 286.6" stroke="#ffc020" stroke-width="0.9" opacity="0.6"/><path d="M387.9 269.5 L388.9 287.1" stroke="#ffe040" stroke-width="0.9" opacity="0.6"/><path d="M391.7 273.6 L392.7 287.8" stroke="#ffe040" stroke-width="0.9" opacity="0.6"/><path d="M394.3 274.7 L395.3 288.3" stroke="#ffc020" stroke-width="0.9" opacity="0.6"/><path d="M397.4 273.9 L398.4 288.9" stroke="#ff9000" stroke-width="0.9" opacity="0.6"/><path d="M399.6 268.4 L400.6 289.3" stroke="#ffc020" stroke-width="0.9" opacity="0.6"/><path d="M402.5 271.3 L403.5 289.9" stroke="#ff9000" stroke-width="0.9" opacity="0.6"/><path d="M405.5 269.0 L406.5 290.4" stroke="#ff9000" stroke-width="0.9" opacity="0.6"/><path d="M407.3 273.9 L408.3 290.8" stroke="#ffe040" stroke-width="0.9" opacity="0.6"/><path d="M411.3 270.5 L412.3 291.5" stroke="#ff7a00" stroke-width="0.9" opacity="0.6"/><path d="M412.9 272.1 L413.9 291.8" stroke="#ffc020" stroke-width="0.9" opacity="0.6"/><path d="M346 196 L380 190 L416 194 L416 230 L396 229 L382 219 L352 214 Z" fill="#c41000"/><path d="M384 192 L410 196 L412 222 L392 220 Z" fill="#b00800"/><path d="M356 200 L372 198 L374 212 L358 213 Z" fill="#e84000" opacity="0.7"/><path d="M395 228 L416 232 L416 250 L398 246 Z" fill="#d83000" opacity="0.6"/><ellipse cx="365" cy="226" rx="14.5" ry="6.2" fill="none" stroke="#7a0800" stroke-width="2.8"/><path d="M352 226 h26 M365 220.5 v11" stroke="#900a00" stroke-width="1.1"/><path d="M378 222 v12" stroke="#900a00" stroke-width="3"/><path d="M61 284 L236 300" stroke="#c80a00" stroke-width="2" opacity="0.6"/><path d="M120 250 L200 262" stroke="#c80800" stroke-width="3" opacity="0.5"/><path d="M232 262 L416 298 L416 312 L232 274 Z" fill="#a60000" opacity="0.8"/><path d="M300 284 L340 290" stroke="#d01800" stroke-width="3" opacity="0.6"/><path d="M224 257 Q245 277 262 276 Q285 276 302 272" stroke="#ff9020" stroke-width="1.5" fill="none"/><rect x="302" y="299" width="16.5" height="14" rx="3" fill="#ffc000"/><rect x="303.5" y="300" width="13" height="7" rx="2" fill="#ffff60"/><rect x="304" y="309" width="12" height="3" fill="#ff9000"/><path d="M270 306 L302 306 M318 306 L340 308" stroke="#c41000" stroke-width="1.5"/></g><path d="M102 77 L158 75 L159 98 L100 89 Z" fill="url(#dots)" opacity="0.9"/><path d="M166 97 L186 91 L187 106 L166 104 Z" fill="url(#dots)" opacity="0.9"/><path d="M159.4 118.1 L109.2 175.7" stroke="#0000ff" stroke-width="2"/><path d="M112.3 124 L129.5 148.5" stroke="#0000ff" stroke-width="1.8"/><path d="M131 150.5 l-5.5-2.5 l4-3.5z" fill="#0000ff"/><path d="M190.8 102.4 L162 116" stroke="#ff00ff" stroke-width="1.8"/><path d="M159.5 117 l5-5 l1.5 5z" fill="#ff00ff"/><path d="M86.8 177.2 Q95 178 100.8 183" stroke="#ffff00" stroke-width="1.5" fill="none"/><path d="M102 184 l-5-1 l3-4z" fill="#ffff00"/><rect x="216" y="112" width="6" height="6" fill="#40e0ff"/><rect x="219" y="114" width="3" height="2" fill="#ff40ff"/><path d="M222 115 L349 129.6" stroke="#00f000" stroke-width="1.8"/><path d="M345.5 126 v6 M350 126 v6" stroke="#808080" stroke-width="0.8"/><path d="M294.8 187.2 L262 201" stroke="#00f000" stroke-width="1.6"/><path d="M260 202 l6-5 l0.5 5z" fill="#00f000"/><circle cx="259.5" cy="202" r="1.8" fill="none" stroke="#00c000" stroke-width="1"/><polyline points="332.3,189 336,186.2 340.7,183.4 342.5,190 345.3,190.9 348.1,193.7 351.8,194.6 353.7,191.8 356.5,198.3 359.3,196.5 361.1,192.7 363.9,200.2 365.8,191.8 367.6,194.6 370.4,196.5 372.3,193.7 375.1,200.2 377.9,203.9 379.7,197.4 382.5,202 385.3,197.4 388.1,200.2 390.9,203 393.7,201.1 396.5,203.9 399.3,206.7 402,208.6 403.9,203 405.8,212.3 408.6,210.4" stroke="#0000ff" stroke-width="2.4" fill="none" stroke-linejoin="round"/><rect x="192.3" y="208.5" width="50.7" height="42.5" fill="none" stroke="#0000ff" stroke-width="2"/><path d="M225 230 l6 6 M231 230 l-6 6" stroke="#e03000" stroke-width="0.7"/><path d="M226.5 285.8 L222.2 258" stroke="#0000ff" stroke-width="1.8"/><path d="M221.6 254.5 l-2.4 5.4 l5.6 -0.8z" fill="#0000ff"/><path d="M318.5 226.9 L394.2 254" stroke="#0000ff" stroke-width="2"/></g></svg>
<div class="a" style="left:93.1px;top:104.8px;width:24.1px;height:18.6px;background:#fff;border:1px solid #383838"></div>
<div class="t" style="left:95.70px;top:105.87px;font-size:7px;color:#181818;-webkit-text-stroke:0.15px #181818">Diff. 2</div>
<div class="t" style="left:95.70px;top:113.57px;font-size:7px;color:#181818;-webkit-text-stroke:0.15px #181818">1.03</div>
<div class="a" style="left:189.5px;top:86.1px;width:26.4px;height:20px;background:#fff;border:1px solid #383838"></div>
<div class="t" style="left:192.10px;top:87.17px;font-size:7px;color:#181818;-webkit-text-stroke:0.15px #181818">Spot 5</div>
<div class="t" style="left:192.10px;top:94.87px;font-size:7px;color:#181818;-webkit-text-stroke:0.15px #181818">293.42</div>
<div class="a" style="left:61px;top:163.1px;width:25.8px;height:18px;background:#fff;border:1px solid #383838"></div>
<div class="t" style="left:63.60px;top:164.17px;font-size:7px;color:#181818;-webkit-text-stroke:0.15px #181818">Spot 4</div>
<div class="t" style="left:63.60px;top:171.87px;font-size:7px;color:#181818;transform:scaleX(0.9715);-webkit-text-stroke:0.15px #181818">294.44</div>
<div class="a" style="left:352px;top:130.3px;width:25.2px;height:26px;background:#fff;border:1px solid #383838"></div>
<div class="t" style="left:354.60px;top:131.37px;font-size:7px;color:#181818;-webkit-text-stroke:0.15px #181818">Line 1</div>
<div class="t" style="left:354.60px;top:139.27px;font-size:7px;color:#181818;transform:scaleX(0.9435);-webkit-text-stroke:0.15px #181818">Length</div>
<div class="t" style="left:354.60px;top:147.17px;font-size:7px;color:#181818;-webkit-text-stroke:0.15px #181818">13.2</div>
<div class="a" style="left:294.8px;top:171.5px;width:25.8px;height:18.3px;background:#fff;border:1px solid #383838"></div>
<div class="t" style="left:297.40px;top:172.57px;font-size:7px;color:#181818;-webkit-text-stroke:0.15px #181818">Spot 3</div>
<div class="t" style="left:297.40px;top:180.27px;font-size:7px;color:#181818;transform:scaleX(0.9715);-webkit-text-stroke:0.15px #181818">291.56</div>
<div class="a" style="left:188.3px;top:285.4px;width:77.1px;height:26.9px;background:#fff;border:1px solid #383838"></div>
<div class="t" style="left:190.90px;top:285.87px;font-size:7px;color:#181818;-webkit-text-stroke:0.15px #181818">Area 2</div>
<div class="t" style="left:190.90px;top:293.82px;font-size:7px;color:#181818;-webkit-text-stroke:0.15px #181818">Max.</div>
<div class="t" style="left:214.90px;top:293.82px;font-size:7px;color:#181818;-webkit-text-stroke:0.15px #181818">Avg.</div>
<div class="t" style="left:238.80px;top:293.82px;font-size:7px;color:#181818;-webkit-text-stroke:0.15px #181818">Min.</div>
<div class="t" style="left:190.90px;top:301.77px;font-size:7px;color:#181818;-webkit-text-stroke:0.15px #181818">298.73</div>
<div class="t" style="left:214.90px;top:301.77px;font-size:7px;color:#181818;-webkit-text-stroke:0.15px #181818">293.51</div>
<div class="t" style="left:238.80px;top:301.77px;font-size:7px;color:#181818;-webkit-text-stroke:0.15px #181818">286.50</div>
<div class="a" style="left:352.3px;top:254px;width:35.3px;height:11.6px;background:#fff;border:1px solid #383838"></div>
<div class="t" style="left:354.90px;top:255.07px;font-size:7px;color:#181818;transform:scaleX(0.9858);-webkit-text-stroke:0.15px #181818">OSProf. 1</div>
<div class="a" style="left:2px;top:338px;width:415px;height:11px;background:#e4e4ea"></div>
<div class="a" style="left:60px;top:338.5px;width:1px;height:10px;background:#c4c4cc;border-right:1px solid #fff"></div>
<div class="a" style="left:83.1px;top:338.5px;width:1px;height:10px;background:#c4c4cc;border-right:1px solid #fff"></div>
<div class="a" style="left:118.9px;top:338.5px;width:1px;height:10px;background:#c4c4cc;border-right:1px solid #fff"></div>
<div class="a" style="left:164.3px;top:338.5px;width:1px;height:10px;background:#c4c4cc;border-right:1px solid #fff"></div>
<div class="a" style="left:195.8px;top:338.5px;width:1px;height:10px;background:#c4c4cc;border-right:1px solid #fff"></div>
<div class="a" style="left:244.4px;top:338.5px;width:1px;height:10px;background:#c4c4cc;border-right:1px solid #fff"></div>
<div class="t" style="left:7.60px;top:338.52px;font-size:8.6px;font-weight:bold;font-style:italic;color:#d01818;transform:scaleX(0.8388)">Thermoteknix</div>
<div class="t" style="left:61.70px;top:338.52px;font-size:8.6px;color:#202030;transform:scaleX(0.7809);-webkit-text-stroke:0.15px #202030">Miricle</div>
<div class="t" style="left:86.20px;top:338.52px;font-size:8.6px;color:#202030;transform:scaleX(0.9021);-webkit-text-stroke:0.15px #202030">08:03:52</div>
<div class="t" style="left:121.70px;top:338.52px;font-size:8.6px;color:#202030;transform:scaleX(0.9504);-webkit-text-stroke:0.15px #202030">29/11/2008</div>
<div class="t" style="left:166.30px;top:338.52px;font-size:8.6px;color:#202030;transform:scaleX(0.9376);-webkit-text-stroke:0.15px #202030">e : 0.93</div>
<div class="t" style="left:198.30px;top:338.52px;font-size:8.6px;color:#202030;transform:scaleX(0.9009);-webkit-text-stroke:0.15px #202030">Bg : 297.15K</div>
<div class="a" style="left:419px;top:48px;width:611.5px;height:304px;background:#e6e6ee;border:1px solid #b4b4c4;border-top:none;border-radius:6px 6px 0 0"></div>
<div class="a" style="left:419.5px;top:48.4px;width:610.5px;height:19.6px;border-radius:6px 6px 0 0;border-top:1px solid #c4c4d0;background:linear-gradient(#dcdce6 0,#d8d8e4 2px,#e4e4ec 6px,#f0f0f4 11px,#fbfbfc 15px,#ffffff 17px,#a8a8b0 18.3px,#8c8c90 19.6px)"></div>
<svg style="left:423.8px;top:54.5px" width="9.8" height="6.6" viewBox="0 0 12 8"><rect x="0.5" y="1" width="11" height="6" rx="2.5" fill="#f0e000" stroke="#555500" stroke-width="0.8"/><rect x="4" y="2.5" width="1.5" height="3" fill="#333"/><rect x="7" y="2.5" width="1.5" height="3" fill="#333"/><circle cx="1" cy="4" r="1" fill="#223"/></svg>
<div class="t" style="left:436.40px;top:51.23px;font-size:12.6px;color:#a2a2a8;-webkit-text-stroke:0.2px #a2a2a8">2008-11-29-080352.tgw:3</div>
<div class="xpb in" style="left:978.0px;top:50px;width:15px;height:15px"></div><div class="a" style="left:982.0px;top:60px;width:6px;height:1.6px;background:#b8b8c4"></div>
<div class="xpb in" style="left:995.0px;top:50px;width:15px;height:15px"></div><div class="a" style="left:998.5px;top:53px;width:8px;height:7.5px;border:1px solid #b0b0bc;border-top-width:2px"></div>
<div class="xpc in" style="left:1011.5px;top:50px;width:15.5px;height:15px"></div><svg style="left:1011.5px;top:50px" width="16" height="15"><path d="M4 3.5 L11.5 11 M11.5 3.5 L4 11" stroke="#fff" stroke-width="2"/></svg><div class="a" style="left:421.5px;top:67.5px;width:607px;height:283px;background:#fff;border-left:1.5px solid #8c8c98;border-top:1px solid #a0a0a8"></div>
<div class="t" style="left:710.50px;top:70.87px;font-size:10.2px;color:#101010;-webkit-text-stroke:0.15px #101010">Area 2</div>
<div class="t" style="left:440.11px;top:292.45px;font-size:7.4px;color:#1a1a38;-webkit-text-stroke:0.15px #1a1a38">2.0</div>
<div class="t" style="left:440.11px;top:273.76px;font-size:7.4px;color:#1a1a38;-webkit-text-stroke:0.15px #1a1a38">4.0</div>
<div class="t" style="left:440.11px;top:255.07px;font-size:7.4px;color:#1a1a38;-webkit-text-stroke:0.15px #1a1a38">6.0</div>
<div class="t" style="left:440.11px;top:236.38px;font-size:7.4px;color:#1a1a38;-webkit-text-stroke:0.15px #1a1a38">8.0</div>
<div class="t" style="left:436.00px;top:217.69px;font-size:7.4px;color:#1a1a38;-webkit-text-stroke:0.15px #1a1a38">10.0</div>
<div class="t" style="left:436.00px;top:199.00px;font-size:7.4px;color:#1a1a38;-webkit-text-stroke:0.15px #1a1a38">12.0</div>
<div class="t" style="left:436.00px;top:180.31px;font-size:7.4px;color:#1a1a38;-webkit-text-stroke:0.15px #1a1a38">14.0</div>
<div class="t" style="left:436.00px;top:161.62px;font-size:7.4px;color:#1a1a38;-webkit-text-stroke:0.15px #1a1a38">16.0</div>
<div class="t" style="left:436.00px;top:142.93px;font-size:7.4px;color:#1a1a38;-webkit-text-stroke:0.15px #1a1a38">18.0</div>
<div class="t" style="left:436.00px;top:124.24px;font-size:7.4px;color:#1a1a38;-webkit-text-stroke:0.15px #1a1a38">20.0</div>
<div class="t" style="left:436.00px;top:105.55px;font-size:7.4px;color:#1a1a38;-webkit-text-stroke:0.15px #1a1a38">22.0</div>
<div class="t" style="left:436.00px;top:86.86px;font-size:7.4px;color:#1a1a38;-webkit-text-stroke:0.15px #1a1a38">24.0</div>
<div class="t" style="left:441.28px;top:320.34px;font-size:7.4px;color:#1a1a38;-webkit-text-stroke:0.15px #1a1a38">281.19</div>
<div class="t" style="left:494.15px;top:320.34px;font-size:7.4px;color:#1a1a38;-webkit-text-stroke:0.15px #1a1a38">283.99</div>
<div class="t" style="left:547.01px;top:320.34px;font-size:7.4px;color:#1a1a38;-webkit-text-stroke:0.15px #1a1a38">286.78</div>
<div class="t" style="left:599.87px;top:320.34px;font-size:7.4px;color:#1a1a38;-webkit-text-stroke:0.15px #1a1a38">289.58</div>
<div class="t" style="left:652.74px;top:320.34px;font-size:7.4px;color:#1a1a38;-webkit-text-stroke:0.15px #1a1a38">292.38</div>
<div class="t" style="left:705.60px;top:320.34px;font-size:7.4px;color:#1a1a38;-webkit-text-stroke:0.15px #1a1a38">295.18</div>
<div class="t" style="left:758.47px;top:320.34px;font-size:7.4px;color:#1a1a38;-webkit-text-stroke:0.15px #1a1a38">297.97</div>
<div class="t" style="left:811.33px;top:320.34px;font-size:7.4px;color:#1a1a38;-webkit-text-stroke:0.15px #1a1a38">300.77</div>
<div class="t" style="left:864.19px;top:320.34px;font-size:7.4px;color:#1a1a38;-webkit-text-stroke:0.15px #1a1a38">303.57</div>
<div class="t" style="left:917.06px;top:320.34px;font-size:7.4px;color:#1a1a38;-webkit-text-stroke:0.15px #1a1a38">306.37</div>
<div class="t" style="left:1004.96px;top:320.34px;font-size:7.4px;color:#1a1a38;-webkit-text-stroke:0.15px #1a1a38">311.03</div>
<svg style="left:0;top:0" width="1032" height="352"><path d="M454 295.8 H1016" stroke="#303030" stroke-width="1" stroke-dasharray="2 1.5"/><path d="M454 277.1 H1016" stroke="#303030" stroke-width="1" stroke-dasharray="2 1.5"/><path d="M454 258.4 H1016" stroke="#303030" stroke-width="1" stroke-dasharray="2 1.5"/><path d="M454 239.7 H1016" stroke="#303030" stroke-width="1" stroke-dasharray="2 1.5"/><path d="M454 221.1 H1016" stroke="#303030" stroke-width="1" stroke-dasharray="2 1.5"/><path d="M454 202.4 H1016" stroke="#303030" stroke-width="1" stroke-dasharray="2 1.5"/><path d="M454 183.7 H1016" stroke="#303030" stroke-width="1" stroke-dasharray="2 1.5"/><path d="M454 165.0 H1016" stroke="#303030" stroke-width="1" stroke-dasharray="2 1.5"/><path d="M454 146.3 H1016" stroke="#303030" stroke-width="1" stroke-dasharray="2 1.5"/><path d="M454 127.6 H1016" stroke="#303030" stroke-width="1" stroke-dasharray="2 1.5"/><path d="M454 108.9 H1016" stroke="#303030" stroke-width="1" stroke-dasharray="2 1.5"/><path d="M454 90.2 H1016" stroke="#303030" stroke-width="1" stroke-dasharray="2 1.5"/><path d="M558.5 314.5 L558.5 310.9 L575.9 310.9 L575.9 277.9 L593.6 277.9 L593.6 304.8 L611.3 304.8 L611.3 307.5 L628.7 307.5 L628.7 274.9 L646 274.9 L646 238.8 L664.4 238.8 L664.4 172.6 L681.2 172.6 L681.2 137.5 L699.5 137.5 L699.5 157.3 L717.2 157.3 L717.2 168.2 L734.5 168.2 L734.5 230.2 L752.4 230.2 L752.4 279.5 L769.9 279.5 L769.9 296.7 L787.4 296.7 L787.4 313.2 L805.6 313.2 L805.6 314.5 Z" fill="#0000ff" stroke="#000" stroke-width="1"/><path d="M452.6 81.3 V314.5" stroke="#404040" stroke-width="1" stroke-dasharray="1.6 1.6"/><path d="M452.6 81.3 V314.5" stroke="#606060" stroke-width="0.6"/><path d="M452.6 314.5 H1016" stroke="#202020" stroke-width="1.2" stroke-dasharray="2 1.5"/><path d="M449.6 314.5 h3" stroke="#303030" stroke-width="1"/><path d="M449.6 295.8 h3" stroke="#303030" stroke-width="1"/><path d="M449.6 277.1 h3" stroke="#303030" stroke-width="1"/><path d="M449.6 258.4 h3" stroke="#303030" stroke-width="1"/><path d="M449.6 239.7 h3" stroke="#303030" stroke-width="1"/><path d="M449.6 221.1 h3" stroke="#303030" stroke-width="1"/><path d="M449.6 202.4 h3" stroke="#303030" stroke-width="1"/><path d="M449.6 183.7 h3" stroke="#303030" stroke-width="1"/><path d="M449.6 165.0 h3" stroke="#303030" stroke-width="1"/><path d="M449.6 146.3 h3" stroke="#303030" stroke-width="1"/><path d="M449.6 127.6 h3" stroke="#303030" stroke-width="1"/><path d="M449.6 108.9 h3" stroke="#303030" stroke-width="1"/><path d="M449.6 90.2 h3" stroke="#303030" stroke-width="1"/><path d="M450.6 314.5 h2" stroke="#707070" stroke-width="0.7"/><path d="M450.6 309.8 h2" stroke="#707070" stroke-width="0.7"/><path d="M450.6 305.2 h2" stroke="#707070" stroke-width="0.7"/><path d="M450.6 300.5 h2" stroke="#707070" stroke-width="0.7"/><path d="M450.6 295.8 h2" stroke="#707070" stroke-width="0.7"/><path d="M450.6 291.1 h2" stroke="#707070" stroke-width="0.7"/><path d="M450.6 286.5 h2" stroke="#707070" stroke-width="0.7"/><path d="M450.6 281.8 h2" stroke="#707070" stroke-width="0.7"/><path d="M450.6 277.1 h2" stroke="#707070" stroke-width="0.7"/><path d="M450.6 272.4 h2" stroke="#707070" stroke-width="0.7"/><path d="M450.6 267.8 h2" stroke="#707070" stroke-width="0.7"/><path d="M450.6 263.1 h2" stroke="#707070" stroke-width="0.7"/><path d="M450.6 258.4 h2" stroke="#707070" stroke-width="0.7"/><path d="M450.6 253.8 h2" stroke="#707070" stroke-width="0.7"/><path d="M450.6 249.1 h2" stroke="#707070" stroke-width="0.7"/><path d="M450.6 244.4 h2" stroke="#707070" stroke-width="0.7"/><path d="M450.6 239.7 h2" stroke="#707070" stroke-width="0.7"/><path d="M450.6 235.1 h2" stroke="#707070" stroke-width="0.7"/><path d="M450.6 230.4 h2" stroke="#707070" stroke-width="0.7"/><path d="M450.6 225.7 h2" stroke="#707070" stroke-width="0.7"/><path d="M450.6 221.1 h2" stroke="#707070" stroke-width="0.7"/><path d="M450.6 216.4 h2" stroke="#707070" stroke-width="0.7"/><path d="M450.6 211.7 h2" stroke="#707070" stroke-width="0.7"/><path d="M450.6 207.0 h2" stroke="#707070" stroke-width="0.7"/><path d="M450.6 202.4 h2" stroke="#707070" stroke-width="0.7"/><path d="M450.6 197.7 h2" stroke="#707070" stroke-width="0.7"/><path d="M450.6 193.0 h2" stroke="#707070" stroke-width="0.7"/><path d="M450.6 188.3 h2" stroke="#707070" stroke-width="0.7"/><path d="M450.6 183.7 h2" stroke="#707070" stroke-width="0.7"/><path d="M450.6 179.0 h2" stroke="#707070" stroke-width="0.7"/><path d="M450.6 174.3 h2" stroke="#707070" stroke-width="0.7"/><path d="M450.6 169.7 h2" stroke="#707070" stroke-width="0.7"/><path d="M450.6 165.0 h2" stroke="#707070" stroke-width="0.7"/><path d="M450.6 160.3 h2" stroke="#707070" stroke-width="0.7"/><path d="M450.6 155.6 h2" stroke="#707070" stroke-width="0.7"/><path d="M450.6 151.0 h2" stroke="#707070" stroke-width="0.7"/><path d="M450.6 146.3 h2" stroke="#707070" stroke-width="0.7"/><path d="M450.6 141.6 h2" stroke="#707070" stroke-width="0.7"/><path d="M450.6 136.9 h2" stroke="#707070" stroke-width="0.7"/><path d="M450.6 132.3 h2" stroke="#707070" stroke-width="0.7"/><path d="M450.6 127.6 h2" stroke="#707070" stroke-width="0.7"/><path d="M450.6 122.9 h2" stroke="#707070" stroke-width="0.7"/><path d="M450.6 118.3 h2" stroke="#707070" stroke-width="0.7"/><path d="M450.6 113.6 h2" stroke="#707070" stroke-width="0.7"/><path d="M450.6 108.9 h2" stroke="#707070" stroke-width="0.7"/><path d="M450.6 104.2 h2" stroke="#707070" stroke-width="0.7"/><path d="M450.6 99.6 h2" stroke="#707070" stroke-width="0.7"/><path d="M450.6 94.9 h2" stroke="#707070" stroke-width="0.7"/><path d="M450.6 90.2 h2" stroke="#707070" stroke-width="0.7"/><path d="M450.6 85.5 h2" stroke="#707070" stroke-width="0.7"/><path d="M452.6 314.5 v3" stroke="#303030" stroke-width="1"/><path d="M505.5 314.5 v3" stroke="#303030" stroke-width="1"/><path d="M558.3 314.5 v3" stroke="#303030" stroke-width="1"/><path d="M611.2 314.5 v3" stroke="#303030" stroke-width="1"/><path d="M664.1 314.5 v3" stroke="#303030" stroke-width="1"/><path d="M716.9 314.5 v3" stroke="#303030" stroke-width="1"/><path d="M769.8 314.5 v3" stroke="#303030" stroke-width="1"/><path d="M822.6 314.5 v3" stroke="#303030" stroke-width="1"/><path d="M875.5 314.5 v3" stroke="#303030" stroke-width="1"/><path d="M928.4 314.5 v3" stroke="#303030" stroke-width="1"/></svg><div class="t" style="left:695.90px;top:329.40px;font-size:10.4px;color:#101010;-webkit-text-stroke:0.15px #101010">Temperature / K</div>
<div class="t" style="left:427.1px;top:236.9px;font-size:10px;color:#101010;-webkit-text-stroke:0.2px #101010;transform:rotate(-90deg) scaleX(0.993)">Percentage</div><div class="a" style="left:425px;top:340px;width:602px;height:1px;background:#b8b8c0"></div>
<div class="t" style="left:426.30px;top:342.31px;font-size:7.67px;color:#1a1a30;-webkit-text-stroke:0.15px #1a1a30">Max 298.73  Avg 293.51  Min 286.50  SD 2.19  Skew -0.67</div>
<div class="a" style="left:418px;top:351.5px;width:612.5px;height:260px;background:#e6e6ee;border:1px solid #b4b4c4;border-top:none;border-radius:6px 6px 0 0"></div>
<div class="a" style="left:418.5px;top:351.9px;width:611.5px;height:19.6px;border-radius:6px 6px 0 0;border-top:1px solid #c4c4d0;background:linear-gradient(#dcdce6 0,#d8d8e4 2px,#e4e4ec 6px,#f0f0f4 11px,#fbfbfc 15px,#ffffff 17px,#a8a8b0 18.3px,#8c8c90 19.6px)"></div>
<svg style="left:422.8px;top:358.0px" width="9.8" height="6.6" viewBox="0 0 12 8"><rect x="0.5" y="1" width="11" height="6" rx="2.5" fill="#f0e000" stroke="#555500" stroke-width="0.8"/><rect x="4" y="2.5" width="1.5" height="3" fill="#333"/><rect x="7" y="2.5" width="1.5" height="3" fill="#333"/><circle cx="1" cy="4" r="1" fill="#223"/></svg>
<div class="t" style="left:435.40px;top:354.53px;font-size:12.6px;color:#a2a2a8;-webkit-text-stroke:0.2px #a2a2a8">2008-11-29-080352.tgw:2</div>
<div class="xpb in" style="left:978.0px;top:353.5px;width:15px;height:15px"></div><div class="a" style="left:982.0px;top:363.5px;width:6px;height:1.6px;background:#b8b8c4"></div>
<div class="xpb in" style="left:995.0px;top:353.5px;width:15px;height:15px"></div><div class="a" style="left:998.5px;top:356.5px;width:8px;height:7.5px;border:1px solid #b0b0bc;border-top-width:2px"></div>
<div class="xpc in" style="left:1011.5px;top:353.5px;width:15.5px;height:15px"></div><svg style="left:1011.5px;top:353.5px" width="16" height="15"><path d="M4 3.5 L11.5 11 M11.5 3.5 L4 11" stroke="#fff" stroke-width="2"/></svg><div class="a" style="left:420.5px;top:371px;width:608px;height:236.5px;background:#fff;border-left:1.5px solid #8c8c98;border-top:1px solid #a0a0a8"></div>
<div class="t" style="left:711.00px;top:374.17px;font-size:10.2px;color:#101010;transform:scaleX(1.0435);-webkit-text-stroke:0.15px #101010">Line 1</div>
<div class="t" style="left:433.90px;top:388.04px;font-size:7.4px;color:#1a1a38;transform:scaleX(1.0427);-webkit-text-stroke:0.15px #1a1a38">310.00</div>
<div class="t" style="left:433.90px;top:400.50px;font-size:7.4px;color:#1a1a38;transform:scaleX(1.0427);-webkit-text-stroke:0.15px #1a1a38">308.00</div>
<div class="t" style="left:433.90px;top:412.96px;font-size:7.4px;color:#1a1a38;transform:scaleX(1.0427);-webkit-text-stroke:0.15px #1a1a38">306.00</div>
<div class="t" style="left:433.90px;top:425.43px;font-size:7.4px;color:#1a1a38;transform:scaleX(1.0427);-webkit-text-stroke:0.15px #1a1a38">304.00</div>
<div class="t" style="left:433.90px;top:437.89px;font-size:7.4px;color:#1a1a38;transform:scaleX(1.0427);-webkit-text-stroke:0.15px #1a1a38">302.00</div>
<div class="t" style="left:433.90px;top:450.36px;font-size:7.4px;color:#1a1a38;transform:scaleX(1.0427);-webkit-text-stroke:0.15px #1a1a38">300.00</div>
<div class="t" style="left:433.90px;top:462.82px;font-size:7.4px;color:#1a1a38;transform:scaleX(1.0427);-webkit-text-stroke:0.15px #1a1a38">298.00</div>
<div class="t" style="left:433.90px;top:475.28px;font-size:7.4px;color:#1a1a38;transform:scaleX(1.0427);-webkit-text-stroke:0.15px #1a1a38">296.00</div>
<div class="t" style="left:433.90px;top:487.75px;font-size:7.4px;color:#1a1a38;transform:scaleX(1.0427);-webkit-text-stroke:0.15px #1a1a38">294.00</div>
<div class="t" style="left:433.90px;top:500.21px;font-size:7.4px;color:#1a1a38;transform:scaleX(1.0427);-webkit-text-stroke:0.15px #1a1a38">292.00</div>
<div class="t" style="left:433.90px;top:512.68px;font-size:7.4px;color:#1a1a38;transform:scaleX(1.0427);-webkit-text-stroke:0.15px #1a1a38">290.00</div>
<div class="t" style="left:433.90px;top:525.14px;font-size:7.4px;color:#1a1a38;transform:scaleX(1.0427);-webkit-text-stroke:0.15px #1a1a38">288.00</div>
<div class="t" style="left:433.90px;top:537.60px;font-size:7.4px;color:#1a1a38;transform:scaleX(1.0427);-webkit-text-stroke:0.15px #1a1a38">286.00</div>
<div class="t" style="left:433.90px;top:550.07px;font-size:7.4px;color:#1a1a38;transform:scaleX(1.0427);-webkit-text-stroke:0.15px #1a1a38">284.00</div>
<div class="t" style="left:433.90px;top:562.53px;font-size:7.4px;color:#1a1a38;transform:scaleX(1.0427);-webkit-text-stroke:0.15px #1a1a38">282.00</div>
<div class="t" style="left:492.47px;top:576.04px;font-size:7.4px;color:#1a1a38;-webkit-text-stroke:0.15px #1a1a38">1.000</div>
<div class="t" style="left:534.40px;top:576.04px;font-size:7.4px;color:#1a1a38;-webkit-text-stroke:0.15px #1a1a38">2.000</div>
<div class="t" style="left:576.33px;top:576.04px;font-size:7.4px;color:#1a1a38;-webkit-text-stroke:0.15px #1a1a38">3.000</div>
<div class="t" style="left:618.26px;top:576.04px;font-size:7.4px;color:#1a1a38;-webkit-text-stroke:0.15px #1a1a38">4.000</div>
<div class="t" style="left:660.19px;top:576.04px;font-size:7.4px;color:#1a1a38;-webkit-text-stroke:0.15px #1a1a38">5.000</div>
<div class="t" style="left:702.12px;top:576.04px;font-size:7.4px;color:#1a1a38;-webkit-text-stroke:0.15px #1a1a38">6.000</div>
<div class="t" style="left:744.05px;top:576.04px;font-size:7.4px;color:#1a1a38;-webkit-text-stroke:0.15px #1a1a38">7.000</div>
<div class="t" style="left:785.98px;top:576.04px;font-size:7.4px;color:#1a1a38;-webkit-text-stroke:0.15px #1a1a38">8.000</div>
<div class="t" style="left:827.91px;top:576.04px;font-size:7.4px;color:#1a1a38;-webkit-text-stroke:0.15px #1a1a38">9.000</div>
<div class="t" style="left:867.78px;top:576.04px;font-size:7.4px;color:#1a1a38;-webkit-text-stroke:0.15px #1a1a38">10.000</div>
<div class="t" style="left:909.99px;top:576.04px;font-size:7.4px;color:#1a1a38;-webkit-text-stroke:0.15px #1a1a38">11.000</div>
<div class="t" style="left:951.64px;top:576.04px;font-size:7.4px;color:#1a1a38;-webkit-text-stroke:0.15px #1a1a38">12.000</div>
<svg style="left:0;top:0" width="1032" height="620"><path d="M461 391.4 H1014" stroke="#303030" stroke-width="1" stroke-dasharray="2 1.5"/><path d="M456.8 391.4 h3" stroke="#303030" stroke-width="1"/><path d="M461 403.9 H1014" stroke="#303030" stroke-width="1" stroke-dasharray="2 1.5"/><path d="M456.8 403.9 h3" stroke="#303030" stroke-width="1"/><path d="M461 416.3 H1014" stroke="#303030" stroke-width="1" stroke-dasharray="2 1.5"/><path d="M456.8 416.3 h3" stroke="#303030" stroke-width="1"/><path d="M461 428.8 H1014" stroke="#303030" stroke-width="1" stroke-dasharray="2 1.5"/><path d="M456.8 428.8 h3" stroke="#303030" stroke-width="1"/><path d="M461 441.3 H1014" stroke="#303030" stroke-width="1" stroke-dasharray="2 1.5"/><path d="M456.8 441.3 h3" stroke="#303030" stroke-width="1"/><path d="M461 453.7 H1014" stroke="#303030" stroke-width="1" stroke-dasharray="2 1.5"/><path d="M456.8 453.7 h3" stroke="#303030" stroke-width="1"/><path d="M461 466.2 H1014" stroke="#303030" stroke-width="1" stroke-dasharray="2 1.5"/><path d="M456.8 466.2 h3" stroke="#303030" stroke-width="1"/><path d="M461 478.6 H1014" stroke="#303030" stroke-width="1" stroke-dasharray="2 1.5"/><path d="M456.8 478.6 h3" stroke="#303030" stroke-width="1"/><path d="M461 491.1 H1014" stroke="#303030" stroke-width="1" stroke-dasharray="2 1.5"/><path d="M456.8 491.1 h3" stroke="#303030" stroke-width="1"/><path d="M461 503.6 H1014" stroke="#303030" stroke-width="1" stroke-dasharray="2 1.5"/><path d="M456.8 503.6 h3" stroke="#303030" stroke-width="1"/><path d="M461 516.0 H1014" stroke="#303030" stroke-width="1" stroke-dasharray="2 1.5"/><path d="M456.8 516.0 h3" stroke="#303030" stroke-width="1"/><path d="M461 528.5 H1014" stroke="#303030" stroke-width="1" stroke-dasharray="2 1.5"/><path d="M456.8 528.5 h3" stroke="#303030" stroke-width="1"/><path d="M461 541.0 H1014" stroke="#303030" stroke-width="1" stroke-dasharray="2 1.5"/><path d="M456.8 541.0 h3" stroke="#303030" stroke-width="1"/><path d="M461 553.4 H1014" stroke="#303030" stroke-width="1" stroke-dasharray="2 1.5"/><path d="M456.8 553.4 h3" stroke="#303030" stroke-width="1"/><path d="M461 565.9 H1014" stroke="#303030" stroke-width="1" stroke-dasharray="2 1.5"/><path d="M456.8 565.9 h3" stroke="#303030" stroke-width="1"/><path d="M459.8 384.7 V571.4" stroke="#202020" stroke-width="1" stroke-dasharray="2 1"/><path d="M1014.5 384.7 V571.4 M1016.3 384.7 V571.4" stroke="#404040" stroke-width="1" stroke-dasharray="1.5 1.5"/><path d="M459.8 571.4 H1015" stroke="#202020" stroke-width="1.1"/><path d="M501.7 571.4 v3" stroke="#303030" stroke-width="1"/><path d="M543.7 571.4 v3" stroke="#303030" stroke-width="1"/><path d="M585.6 571.4 v3" stroke="#303030" stroke-width="1"/><path d="M627.5 571.4 v3" stroke="#303030" stroke-width="1"/><path d="M669.5 571.4 v3" stroke="#303030" stroke-width="1"/><path d="M711.4 571.4 v3" stroke="#303030" stroke-width="1"/><path d="M753.3 571.4 v3" stroke="#303030" stroke-width="1"/><path d="M795.2 571.4 v3" stroke="#303030" stroke-width="1"/><path d="M837.2 571.4 v3" stroke="#303030" stroke-width="1"/><path d="M879.1 571.4 v3" stroke="#303030" stroke-width="1"/><path d="M921.0 571.4 v3" stroke="#303030" stroke-width="1"/><path d="M963.0 571.4 v3" stroke="#303030" stroke-width="1"/><path d="M468.2 571.4 v2" stroke="#404040" stroke-width="0.8"/><path d="M476.6 571.4 v2" stroke="#404040" stroke-width="0.8"/><path d="M485.0 571.4 v2" stroke="#404040" stroke-width="0.8"/><path d="M493.3 571.4 v2" stroke="#404040" stroke-width="0.8"/><path d="M510.1 571.4 v2" stroke="#404040" stroke-width="0.8"/><path d="M518.5 571.4 v2" stroke="#404040" stroke-width="0.8"/><path d="M526.9 571.4 v2" stroke="#404040" stroke-width="0.8"/><path d="M535.3 571.4 v2" stroke="#404040" stroke-width="0.8"/><path d="M552.0 571.4 v2" stroke="#404040" stroke-width="0.8"/><path d="M560.4 571.4 v2" stroke="#404040" stroke-width="0.8"/><path d="M568.8 571.4 v2" stroke="#404040" stroke-width="0.8"/><path d="M577.2 571.4 v2" stroke="#404040" stroke-width="0.8"/><path d="M594.0 571.4 v2" stroke="#404040" stroke-width="0.8"/><path d="M602.4 571.4 v2" stroke="#404040" stroke-width="0.8"/><path d="M610.7 571.4 v2" stroke="#404040" stroke-width="0.8"/><path d="M619.1 571.4 v2" stroke="#404040" stroke-width="0.8"/><path d="M635.9 571.4 v2" stroke="#404040" stroke-width="0.8"/><path d="M644.3 571.4 v2" stroke="#404040" stroke-width="0.8"/><path d="M652.7 571.4 v2" stroke="#404040" stroke-width="0.8"/><path d="M661.1 571.4 v2" stroke="#404040" stroke-width="0.8"/><path d="M677.8 571.4 v2" stroke="#404040" stroke-width="0.8"/><path d="M686.2 571.4 v2" stroke="#404040" stroke-width="0.8"/><path d="M694.6 571.4 v2" stroke="#404040" stroke-width="0.8"/><path d="M703.0 571.4 v2" stroke="#404040" stroke-width="0.8"/><path d="M719.8 571.4 v2" stroke="#404040" stroke-width="0.8"/><path d="M728.2 571.4 v2" stroke="#404040" stroke-width="0.8"/><path d="M736.5 571.4 v2" stroke="#404040" stroke-width="0.8"/><path d="M744.9 571.4 v2" stroke="#404040" stroke-width="0.8"/><path d="M761.7 571.4 v2" stroke="#404040" stroke-width="0.8"/><path d="M770.1 571.4 v2" stroke="#404040" stroke-width="0.8"/><path d="M778.5 571.4 v2" stroke="#404040" stroke-width="0.8"/><path d="M786.9 571.4 v2" stroke="#404040" stroke-width="0.8"/><path d="M803.6 571.4 v2" stroke="#404040" stroke-width="0.8"/><path d="M812.0 571.4 v2" stroke="#404040" stroke-width="0.8"/><path d="M820.4 571.4 v2" stroke="#404040" stroke-width="0.8"/><path d="M828.8 571.4 v2" stroke="#404040" stroke-width="0.8"/><path d="M845.6 571.4 v2" stroke="#404040" stroke-width="0.8"/><path d="M853.9 571.4 v2" stroke="#404040" stroke-width="0.8"/><path d="M862.3 571.4 v2" stroke="#404040" stroke-width="0.8"/><path d="M870.7 571.4 v2" stroke="#404040" stroke-width="0.8"/><path d="M887.5 571.4 v2" stroke="#404040" stroke-width="0.8"/><path d="M895.9 571.4 v2" stroke="#404040" stroke-width="0.8"/><path d="M904.3 571.4 v2" stroke="#404040" stroke-width="0.8"/><path d="M912.6 571.4 v2" stroke="#404040" stroke-width="0.8"/><path d="M929.4 571.4 v2" stroke="#404040" stroke-width="0.8"/><path d="M937.8 571.4 v2" stroke="#404040" stroke-width="0.8"/><path d="M946.2 571.4 v2" stroke="#404040" stroke-width="0.8"/><path d="M954.6 571.4 v2" stroke="#404040" stroke-width="0.8"/><path d="M971.3 571.4 v2" stroke="#404040" stroke-width="0.8"/><path d="M979.7 571.4 v2" stroke="#404040" stroke-width="0.8"/><path d="M988.1 571.4 v2" stroke="#404040" stroke-width="0.8"/><path d="M996.5 571.4 v2" stroke="#404040" stroke-width="0.8"/><polyline points="459.7,523.3 460.7,517.9 461.8,510.4 462.9,509.1 464.2,508.7 465.2,512.5 466.5,519.9 468.6,521.3 470.6,524.0 472.0,525.4 473.7,524.7 475.4,526.7 476.7,527.7 478.1,526.1 480.8,525.4 482.8,523.3 485.1,521.0 486.5,522.7 487.8,526.7 490.0,529.4 491.9,528.5 493.7,528.8 495.0,529.8 497.1,528.1 499.1,524.7 501.1,518.6 503.2,515.5 504.5,514.9 506.6,516.8 508.6,516.3 510.6,513.8 512.0,510.4 513.3,508.1 514.7,511.1 516.7,515.9 518.1,518.6 520.1,519.3 522.2,521.3 524.2,523.3 526.2,523.1 527.6,522.7 528.9,524.7 531.0,527.4 533.0,529.8 534.4,530.8 536.4,526.1 538.0,527.1 539.8,529.4 541.1,529.8 543.2,527.7 544.5,529.8 546.6,532.8 548.6,534.9 550.6,534.5 552.7,533.5 555.4,533.2 557.4,532.2 560.1,531.7 562.2,531.2 564.2,532.4 566.2,533.9 569.0,531.5 571.0,532.8 573.0,530.8 575.1,531.5 577.1,528.8 579.1,524.7 581.2,517.9 583.2,509.8 585.0,500.5 587.3,494.6 590.0,490.1 592.0,488.7 592.4,489.1 594.1,492.8 596.1,500.3 597.5,508.4 598.8,517.9 600.9,518.6 603.6,519.9 605.6,516.6 608.3,511.8 610.4,505.7 612.4,499.6 614.4,494.8 616.5,492.1 617.8,495.5 619.2,508.4 621.9,514.5 624.6,518.6 627.3,519.0 630.0,511.8 632.7,503.7 635.4,492.1 638.2,482.6 640.9,473.8 643.6,471.1 646.3,471.8 649.0,473.1 651.1,474.5 652.7,473.4 654.4,476.5 656.5,479.9 657.8,482.6 659.2,492.1 660.5,509.8 661.6,520.6 663.9,524.0 666.7,524.7 668.7,523.3 670.0,516.6 671.4,505.7 673.0,494.8 675.5,486.0 678.2,482.0 680.2,479.9 682.3,484.0 685.0,486.7 688.4,490.8 690.4,493.5 693.1,494.2 695.1,496.2 697.2,497.6 699.9,496.5 703.3,495.9 706.0,495.1 708.0,495.9 710.7,493.8 713.5,492.1 716.8,491.5 719.6,489.1 722.3,487.4 724.3,488.7 727.0,487.4 728.4,487.0 731.1,486.7 733.8,485.1 735.9,487.8 738.6,489.4 741.3,493.8 745.4,496.2 748.1,493.8 750.1,493.5 752.8,495.1 754.8,493.5 758.2,497.6 762.3,500.0 765.7,500.3 768.4,500.0 771.1,497.3 773.8,496.5 775.9,497.6 777.9,501.6 779.3,507.1 780.4,516.6 782.7,520.6 784.7,517.2 787.7,508.4 789.4,517.9 792.2,514.5 794.9,512.5 796.9,513.2 798.9,511.8 801.7,519.3 805.7,524.7 807.8,520.6 810.2,513.8 813.2,519.3 815.9,515.2 820.0,509.1 822.7,511.8 825.4,518.6 827.4,519.9 829.7,509.8 832.2,501.0 834.2,508.4 836.9,498.9 839.0,494.2 841.0,491.5 843.0,498.2 845.7,508.4 847.8,519.9 849.8,518.6 852.5,523.3 855.2,527.7 858.6,527.7 860.0,528.0 864.9,528.8 869.9,527.7 874.8,529.3 878.9,529.3 882.7,531.8 886.4,529.7 891.3,529.3 895.4,530.0 899.5,527.7 903.7,526.7 907.8,528.3 911.9,527.2 913.5,526.4 915.2,521.4 917.7,525.5 921.8,523.1 926.7,523.1 930.0,526.4 933.3,529.7 936.1,521.7 940.7,523.9 944.8,528.3 949.8,532.1 954.7,527.7 960.5,529.3 965.4,528.8 969.1,532.6 973.7,533.8 978.6,534.9 982.7,533.8 986.0,532.6 989.3,530.5 991.8,535.4 994.3,534.3 996.7,534.6 999.2,532.9 1001.4,537.1 1005.0,532.9 1008.3,534.9 1010.2,533.8 1013.2,536.2 1015.7,535.4" fill="none" stroke="#008000" stroke-width="2" stroke-linejoin="round"/></svg><div class="t" style="left:691.25px;top:586.20px;font-size:10.4px;color:#101010;-webkit-text-stroke:0.15px #101010">Distance / Meters</div>
<div class="t" style="left:424.6px;top:528.5px;font-size:10px;color:#101010;-webkit-text-stroke:0.2px #101010;transform:rotate(-90deg) scaleX(1.075)">Temperature / K</div><div class="a" style="left:424px;top:596px;width:603px;height:1px;background:#c0c0c8"></div>
<div class="t" style="left:424.20px;top:598.41px;font-size:7.67px;color:#1a1a30;transform:scaleX(1.0067);-webkit-text-stroke:0.15px #1a1a30">Min 286.66  Avg 290.27  Max 297.24  SD 2.75  Skew 0.70  Len 13.247</div>
<div class="a" style="left:0px;top:349.5px;width:8px;height:262px;background:#7c7c7c"></div>
<div class="a" style="left:412px;top:352px;width:6.5px;height:259px;background:#7c7c7c"></div>
<div class="a" style="left:0px;top:611px;width:1032px;height:14px;background:linear-gradient(#c8c8d0 0,#b4b4bc 1.5px,#dedee4 3px,#d8d8de 10px,#cdcdd4 14px)"></div>
<div class="t" style="left:1.00px;top:614.12px;font-size:8.6px;color:#202030;transform:scaleX(0.9830);-webkit-text-stroke:0.15px #202030">For Help, press F1</div>
<div class="a" style="left:938.5px;top:612.5px;width:1px;height:11px;background:#c8c8d0;border-right:1px solid #fff"></div>
<div class="a" style="left:991px;top:612.5px;width:1px;height:11px;background:#c8c8d0;border-right:1px solid #fff"></div>
<div class="t" style="left:835.70px;top:614.12px;font-size:8.6px;color:#202030;transform:scaleX(0.9082);-webkit-text-stroke:0.15px #202030">295.39K @ 34.44m , 11.14m</div>
<div class="t" style="left:993.70px;top:614.12px;font-size:8.6px;color:#202030;transform:scaleX(0.8808);-webkit-text-stroke:0.15px #202030">°C</div>
<div class="t" style="left:1006.60px;top:614.12px;font-size:8.6px;color:#202030;transform:scaleX(0.8598);-webkit-text-stroke:0.15px #202030">Meters</div>
<div class="a" style="left:8px;top:349.5px;width:404px;height:275px;background:#dcdce6;border:1px solid #a8a8b8;border-radius:3px 3px 0 0"></div>
<div class="a" style="left:9px;top:350.5px;width:402px;height:13px;background:linear-gradient(#a8a8c4,#b4b4cc 3px,#d8d8e4 8px,#fafafc 12px,#e8e8ee 13px)"></div>
<div class="t" style="left:10.30px;top:354.27px;font-size:7.6px;font-weight:bold;color:#101018;transform:scaleX(1.0210)">Visual Image</div>
<div class="a" style="left:399px;top:353px;width:9.4px;height:9.3px;background:linear-gradient(#f6b8b0,#ec9890);border:1px solid #e0a0a0;border-radius:2px"></div>
<svg style="left:399px;top:353px" width="10" height="10"><path d="M2.8 2.8 L6.6 6.6 M6.6 2.8 L2.8 6.6" stroke="#fff" stroke-width="1.3"/></svg><div class="a" style="left:11px;top:364px;width:398px;height:260px;background:#f4f4f8;border:1px solid #d0d0dc"></div>
<div class="a" style="left:14px;top:367px;width:392.5px;height:257px;background:#808080"></div>
<div class="a" style="left:0px;top:625px;width:1032px;height:20px;background:linear-gradient(#e8e8f4 0,#e8e8f4 0.8px,#9898b8 1.2px,#9898b8 2px,#eeeef8 2.8px,#eeeef8 3.5px,#9c9cb4 4.2px,#a0a0b8 8px,#b4b6c0 11px,#d8d8de 15px,#e8e8ec 18px,#9090a8 19.5px)"></div>
<div class="a" style="left:960px;top:626.5px;width:72px;height:18.5px;background:linear-gradient(#f6f6fa,#ececf2 5px,#e2e2ea 14px,#c8c8d4);border-left:1px solid #9090a8"></div>
<div class="a" style="left:0px;top:626px;width:63.6px;height:19px;border-radius:0 9px 9px 0;background:linear-gradient(#b8e0b0 0,#5cb050 3px,#3a9a30 8px,#38982e 14px,#2c7c26 19px);box-shadow:inset -2px 0 2px #2a6a24"></div>
<div class="t" style="left:21.40px;top:629.55px;font-size:14px;font-weight:bold;font-style:italic;color:#ffffff;transform:scaleX(0.9128);text-shadow:1px 1px 1px #1a4a1a">start</div>
<svg style="left:6.5px;top:631px" width="12" height="12"><path d="M1 2 q2-1.5 4.5 0 l-1 4 q-2.5-1.2-4.5 0z" fill="#f05020"/><path d="M6 2 q2.5 1.2 5 0 l-1 4 q-2.5 1.2-5 0z" fill="#40b030"/><path d="M0 6.5 q2-1.5 4.5 0 l-1 4 q-2.5-1.2-4.5 0z" fill="#3080f0"/><path d="M5 6.5 q2.5 1.2 5 0 l-1 4 q-2.5 1.2-5 0z" fill="#f0c020"/></svg><svg style="left:0;top:625px" width="1032" height="20"><path d="M70.5 3 v14" stroke="#a0a0b8" stroke-width="1.2" stroke-dasharray="1.2 1.3"/><circle cx="82.5" cy="10.5" r="4.2" fill="none" stroke="#2a70d8" stroke-width="2.2"/><path d="M78 10.5 h8.5" stroke="#2a70d8" stroke-width="1.5"/><path d="M77 14.5 q5 -9 10-8" fill="none" stroke="#e0b020" stroke-width="1"/><rect x="91.5" y="5.5" width="10" height="10" fill="#e0e8ff" stroke="#3060c0" stroke-width="1"/><path d="M93 8 l1.5 5 l1.5-3.5 l1.5 3.5 l1.5-5" fill="none" stroke="#1a40a0" stroke-width="1.1"/><rect x="105.5" y="5.5" width="10" height="10" fill="#e0f0e0" stroke="#308030" stroke-width="1"/><path d="M107.5 7.5 l6 6 M113.5 7.5 l-6 6" stroke="#20a020" stroke-width="1.5"/><path d="M123 7 l1.8 1.5 l-1.8 1.5 M125.5 7 l1.8 1.5 l-1.8 1.5" fill="none" stroke="#111" stroke-width="1"/><path d="M133.5 3 v14" stroke="#a0a0b8" stroke-width="1.2" stroke-dasharray="1.2 1.3"/><path d="M931.7 3 v14" stroke="#a0a0b8" stroke-width="1.2" stroke-dasharray="1.2 1.3"/></svg><div class="a" style="left:140px;top:628.7px;width:97.4px;height:17px;background:linear-gradient(#8a94a4,#6e7a8a 4px,#6c7888);border:1px solid #5a6474;border-radius:3px 3px 0 0"></div>
<svg style="left:146.2px;top:634px" width="9.8" height="6.6" viewBox="0 0 12 8"><rect x="0.5" y="1" width="11" height="6" rx="2.5" fill="#f0e000" stroke="#555500" stroke-width="0.8"/><rect x="4" y="2.5" width="1.5" height="3" fill="#333"/><rect x="7" y="2.5" width="1.5" height="3" fill="#333"/><circle cx="1" cy="4" r="1" fill="#223"/></svg>
<div class="t" style="left:159.00px;top:631.75px;font-size:8.8px;color:#eef0f4;transform:scaleX(0.9097);-webkit-text-stroke:0.15px #eef0f4">TherMonitor - 200...</div>
<div class="a" style="left:238.5px;top:628.5px;width:96.30000000000001px;height:17px;background:linear-gradient(#fbfbfd,#ececf2 6px,#dcdce6);border:1px solid #a8a8bc;border-radius:3px 3px 0 0"></div>
<div class="t" style="left:256.50px;top:631.45px;font-size:8.8px;color:#303040;transform:scaleX(0.8982);-webkit-text-stroke:0.15px #303040">Microsoft PowerP...</div>
<div class="a" style="left:336.8px;top:628.5px;width:96.69999999999999px;height:17px;background:linear-gradient(#fbfbfd,#ececf2 6px,#dcdce6);border:1px solid #a8a8bc;border-radius:3px 3px 0 0"></div>
<div class="t" style="left:354.50px;top:631.45px;font-size:8.8px;color:#303040;transform:scaleX(0.9002);-webkit-text-stroke:0.15px #303040">C:\Documents an...</div>
<svg style="left:243.8px;top:631px" width="10" height="10"><rect x="0.5" y="0.5" width="9" height="9.5" rx="1" fill="#f0c0a0" stroke="#c04010" stroke-width="1"/><circle cx="5" cy="5" r="2.8" fill="#e06030"/></svg><svg style="left:342px;top:632px" width="10" height="9"><path d="M0.5 1.5 h3.5 l1 1 h4.5 v6 h-9z" fill="#f0d060" stroke="#a08020" stroke-width="0.8"/><path d="M0.5 8.5 l1.5-4 h8 l-1.5 4z" fill="#ffe890" stroke="#a08020" stroke-width="0.6"/></svg><div class="t" style="left:938.00px;top:631.75px;font-size:8.8px;color:#202030;transform:scaleX(0.7362);-webkit-text-stroke:0.15px #202030">EN</div>
<svg style="left:954px;top:629px" width="50" height="15"><circle cx="5.3" cy="7" r="5" fill="#b8bcd8" stroke="#6a70a0" stroke-width="0.8"/><path d="M6.5 4.5 l-2.5 2.5 l2.5 2.5" fill="none" stroke="#fff" stroke-width="1.2"/><rect x="13.5" y="3" width="5" height="4.5" fill="#4050a0"/><rect x="16" y="6" width="5" height="5" fill="#5060b0" stroke="#202060" stroke-width="0.5"/><rect x="24" y="2.5" width="6" height="9" fill="#f0f0f0" stroke="#404040" stroke-width="0.8"/><circle cx="30" cy="10" r="2.5" fill="#10a010"/><circle cx="39.5" cy="7" r="4.5" fill="#e8e8ee" stroke="#b0b0bc" stroke-width="1"/></svg><div class="t" style="left:1003.30px;top:631.25px;font-size:8.8px;color:#101020;transform:scaleX(0.8719);-webkit-text-stroke:0.15px #101020">07:59</div>
<div class="a" style="left:0;top:47px;width:1032px;height:1.3px;background:#a2a2a6"></div></body></html>
